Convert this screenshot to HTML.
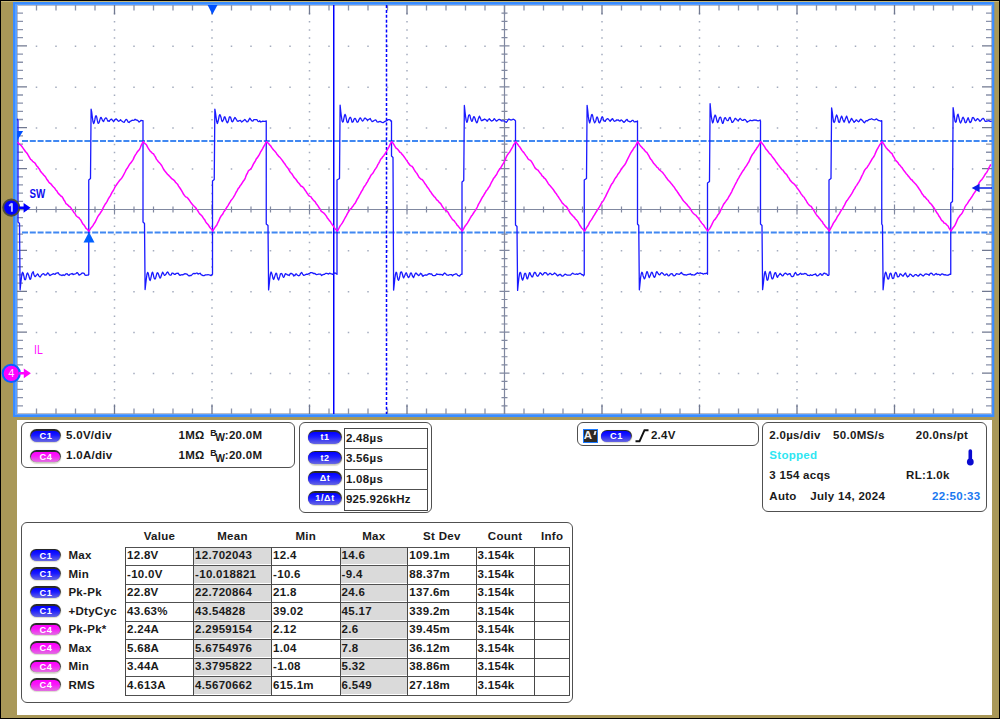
<!DOCTYPE html>
<html><head><meta charset="utf-8"><style>
html,body{margin:0;padding:0;width:1000px;height:719px;overflow:hidden;background:#000}
#s{position:absolute;left:0;top:0}
.t{position:absolute;white-space:nowrap;font-family:"Liberation Sans",sans-serif}
.th{text-align:center;color:#1a1a1a;font-weight:bold}
.box{position:absolute;border:1px solid #505050;background:transparent}
.pill{position:absolute;border-radius:7px;background:linear-gradient(#262626,#3a3a3a 45%,#9a9a90 85%,#d8d8d0);box-shadow:0 0.5px 1px 0.4px #dcdcd0}
.pin{position:absolute;left:0.9px;right:0.9px;top:1.9px;bottom:0.4px;border-radius:6px}
.ptx{position:absolute;left:0;right:0;text-align:center;color:#fff;font-family:"Liberation Sans",sans-serif;font-weight:bold;line-height:1;white-space:nowrap;letter-spacing:0.6px;text-indent:0.6px}
.hl{position:absolute;height:1px;background:#505050}
.vl{position:absolute;width:1px;background:#484848}
.ctab{position:absolute;border:1px solid #484848;box-sizing:border-box}
</style></head><body>
<svg id="s" width="1000" height="719" viewBox="0 0 1000 719">
<rect x="0" y="0" width="1000" height="719" fill="#000"/>
<rect x="1" y="1" width="998" height="717" fill="#a99858"/>
<rect x="1" y="1" width="998" height="1" fill="#c8b878"/>
<rect x="13" y="2" width="981.3" height="415" fill="#3a8cff"/>
<rect x="15" y="4" width="977.3" height="411" fill="#5aa0ff"/>
<rect x="17" y="5" width="975" height="409" fill="#fff"/>
<rect x="17" y="420" width="975" height="295" fill="#fff"/>
<rect x="17.5" y="5.5" width="974" height="408" fill="none" stroke="#b8bccc" stroke-width="1"/>
<path d="M113.75 12.78h1.5v1.5h-1.5zM113.75 20.96h1.5v1.5h-1.5zM113.75 29.14h1.5v1.5h-1.5zM113.75 37.32h1.5v1.5h-1.5zM113.75 45.5h1.5v1.5h-1.5zM113.75 53.68h1.5v1.5h-1.5zM113.75 61.86h1.5v1.5h-1.5zM113.75 70.04h1.5v1.5h-1.5zM113.75 78.22h1.5v1.5h-1.5zM113.75 86.4h1.5v1.5h-1.5zM113.75 94.58h1.5v1.5h-1.5zM113.75 102.76h1.5v1.5h-1.5zM113.75 110.94h1.5v1.5h-1.5zM113.75 119.12h1.5v1.5h-1.5zM113.75 127.3h1.5v1.5h-1.5zM113.75 135.48h1.5v1.5h-1.5zM113.75 143.66h1.5v1.5h-1.5zM113.75 151.84h1.5v1.5h-1.5zM113.75 160.02h1.5v1.5h-1.5zM113.75 168.2h1.5v1.5h-1.5zM113.75 176.38h1.5v1.5h-1.5zM113.75 184.56h1.5v1.5h-1.5zM113.75 192.74h1.5v1.5h-1.5zM113.75 200.92h1.5v1.5h-1.5zM113.75 209.1h1.5v1.5h-1.5zM113.75 217.28h1.5v1.5h-1.5zM113.75 225.46h1.5v1.5h-1.5zM113.75 233.64h1.5v1.5h-1.5zM113.75 241.82h1.5v1.5h-1.5zM113.75 250h1.5v1.5h-1.5zM113.75 258.18h1.5v1.5h-1.5zM113.75 266.36h1.5v1.5h-1.5zM113.75 274.54h1.5v1.5h-1.5zM113.75 282.72h1.5v1.5h-1.5zM113.75 290.9h1.5v1.5h-1.5zM113.75 299.08h1.5v1.5h-1.5zM113.75 307.26h1.5v1.5h-1.5zM113.75 315.44h1.5v1.5h-1.5zM113.75 323.62h1.5v1.5h-1.5zM113.75 331.8h1.5v1.5h-1.5zM113.75 339.98h1.5v1.5h-1.5zM113.75 348.16h1.5v1.5h-1.5zM113.75 356.34h1.5v1.5h-1.5zM113.75 364.52h1.5v1.5h-1.5zM113.75 372.7h1.5v1.5h-1.5zM113.75 380.88h1.5v1.5h-1.5zM113.75 389.06h1.5v1.5h-1.5zM113.75 397.24h1.5v1.5h-1.5zM113.75 405.42h1.5v1.5h-1.5zM211.25 12.78h1.5v1.5h-1.5zM211.25 20.96h1.5v1.5h-1.5zM211.25 29.14h1.5v1.5h-1.5zM211.25 37.32h1.5v1.5h-1.5zM211.25 45.5h1.5v1.5h-1.5zM211.25 53.68h1.5v1.5h-1.5zM211.25 61.86h1.5v1.5h-1.5zM211.25 70.04h1.5v1.5h-1.5zM211.25 78.22h1.5v1.5h-1.5zM211.25 86.4h1.5v1.5h-1.5zM211.25 94.58h1.5v1.5h-1.5zM211.25 102.76h1.5v1.5h-1.5zM211.25 110.94h1.5v1.5h-1.5zM211.25 119.12h1.5v1.5h-1.5zM211.25 127.3h1.5v1.5h-1.5zM211.25 135.48h1.5v1.5h-1.5zM211.25 143.66h1.5v1.5h-1.5zM211.25 151.84h1.5v1.5h-1.5zM211.25 160.02h1.5v1.5h-1.5zM211.25 168.2h1.5v1.5h-1.5zM211.25 176.38h1.5v1.5h-1.5zM211.25 184.56h1.5v1.5h-1.5zM211.25 192.74h1.5v1.5h-1.5zM211.25 200.92h1.5v1.5h-1.5zM211.25 209.1h1.5v1.5h-1.5zM211.25 217.28h1.5v1.5h-1.5zM211.25 225.46h1.5v1.5h-1.5zM211.25 233.64h1.5v1.5h-1.5zM211.25 241.82h1.5v1.5h-1.5zM211.25 250h1.5v1.5h-1.5zM211.25 258.18h1.5v1.5h-1.5zM211.25 266.36h1.5v1.5h-1.5zM211.25 274.54h1.5v1.5h-1.5zM211.25 282.72h1.5v1.5h-1.5zM211.25 290.9h1.5v1.5h-1.5zM211.25 299.08h1.5v1.5h-1.5zM211.25 307.26h1.5v1.5h-1.5zM211.25 315.44h1.5v1.5h-1.5zM211.25 323.62h1.5v1.5h-1.5zM211.25 331.8h1.5v1.5h-1.5zM211.25 339.98h1.5v1.5h-1.5zM211.25 348.16h1.5v1.5h-1.5zM211.25 356.34h1.5v1.5h-1.5zM211.25 364.52h1.5v1.5h-1.5zM211.25 372.7h1.5v1.5h-1.5zM211.25 380.88h1.5v1.5h-1.5zM211.25 389.06h1.5v1.5h-1.5zM211.25 397.24h1.5v1.5h-1.5zM211.25 405.42h1.5v1.5h-1.5zM308.75 12.78h1.5v1.5h-1.5zM308.75 20.96h1.5v1.5h-1.5zM308.75 29.14h1.5v1.5h-1.5zM308.75 37.32h1.5v1.5h-1.5zM308.75 45.5h1.5v1.5h-1.5zM308.75 53.68h1.5v1.5h-1.5zM308.75 61.86h1.5v1.5h-1.5zM308.75 70.04h1.5v1.5h-1.5zM308.75 78.22h1.5v1.5h-1.5zM308.75 86.4h1.5v1.5h-1.5zM308.75 94.58h1.5v1.5h-1.5zM308.75 102.76h1.5v1.5h-1.5zM308.75 110.94h1.5v1.5h-1.5zM308.75 119.12h1.5v1.5h-1.5zM308.75 127.3h1.5v1.5h-1.5zM308.75 135.48h1.5v1.5h-1.5zM308.75 143.66h1.5v1.5h-1.5zM308.75 151.84h1.5v1.5h-1.5zM308.75 160.02h1.5v1.5h-1.5zM308.75 168.2h1.5v1.5h-1.5zM308.75 176.38h1.5v1.5h-1.5zM308.75 184.56h1.5v1.5h-1.5zM308.75 192.74h1.5v1.5h-1.5zM308.75 200.92h1.5v1.5h-1.5zM308.75 209.1h1.5v1.5h-1.5zM308.75 217.28h1.5v1.5h-1.5zM308.75 225.46h1.5v1.5h-1.5zM308.75 233.64h1.5v1.5h-1.5zM308.75 241.82h1.5v1.5h-1.5zM308.75 250h1.5v1.5h-1.5zM308.75 258.18h1.5v1.5h-1.5zM308.75 266.36h1.5v1.5h-1.5zM308.75 274.54h1.5v1.5h-1.5zM308.75 282.72h1.5v1.5h-1.5zM308.75 290.9h1.5v1.5h-1.5zM308.75 299.08h1.5v1.5h-1.5zM308.75 307.26h1.5v1.5h-1.5zM308.75 315.44h1.5v1.5h-1.5zM308.75 323.62h1.5v1.5h-1.5zM308.75 331.8h1.5v1.5h-1.5zM308.75 339.98h1.5v1.5h-1.5zM308.75 348.16h1.5v1.5h-1.5zM308.75 356.34h1.5v1.5h-1.5zM308.75 364.52h1.5v1.5h-1.5zM308.75 372.7h1.5v1.5h-1.5zM308.75 380.88h1.5v1.5h-1.5zM308.75 389.06h1.5v1.5h-1.5zM308.75 397.24h1.5v1.5h-1.5zM308.75 405.42h1.5v1.5h-1.5zM406.25 12.78h1.5v1.5h-1.5zM406.25 20.96h1.5v1.5h-1.5zM406.25 29.14h1.5v1.5h-1.5zM406.25 37.32h1.5v1.5h-1.5zM406.25 45.5h1.5v1.5h-1.5zM406.25 53.68h1.5v1.5h-1.5zM406.25 61.86h1.5v1.5h-1.5zM406.25 70.04h1.5v1.5h-1.5zM406.25 78.22h1.5v1.5h-1.5zM406.25 86.4h1.5v1.5h-1.5zM406.25 94.58h1.5v1.5h-1.5zM406.25 102.76h1.5v1.5h-1.5zM406.25 110.94h1.5v1.5h-1.5zM406.25 119.12h1.5v1.5h-1.5zM406.25 127.3h1.5v1.5h-1.5zM406.25 135.48h1.5v1.5h-1.5zM406.25 143.66h1.5v1.5h-1.5zM406.25 151.84h1.5v1.5h-1.5zM406.25 160.02h1.5v1.5h-1.5zM406.25 168.2h1.5v1.5h-1.5zM406.25 176.38h1.5v1.5h-1.5zM406.25 184.56h1.5v1.5h-1.5zM406.25 192.74h1.5v1.5h-1.5zM406.25 200.92h1.5v1.5h-1.5zM406.25 209.1h1.5v1.5h-1.5zM406.25 217.28h1.5v1.5h-1.5zM406.25 225.46h1.5v1.5h-1.5zM406.25 233.64h1.5v1.5h-1.5zM406.25 241.82h1.5v1.5h-1.5zM406.25 250h1.5v1.5h-1.5zM406.25 258.18h1.5v1.5h-1.5zM406.25 266.36h1.5v1.5h-1.5zM406.25 274.54h1.5v1.5h-1.5zM406.25 282.72h1.5v1.5h-1.5zM406.25 290.9h1.5v1.5h-1.5zM406.25 299.08h1.5v1.5h-1.5zM406.25 307.26h1.5v1.5h-1.5zM406.25 315.44h1.5v1.5h-1.5zM406.25 323.62h1.5v1.5h-1.5zM406.25 331.8h1.5v1.5h-1.5zM406.25 339.98h1.5v1.5h-1.5zM406.25 348.16h1.5v1.5h-1.5zM406.25 356.34h1.5v1.5h-1.5zM406.25 364.52h1.5v1.5h-1.5zM406.25 372.7h1.5v1.5h-1.5zM406.25 380.88h1.5v1.5h-1.5zM406.25 389.06h1.5v1.5h-1.5zM406.25 397.24h1.5v1.5h-1.5zM406.25 405.42h1.5v1.5h-1.5zM601.25 12.78h1.5v1.5h-1.5zM601.25 20.96h1.5v1.5h-1.5zM601.25 29.14h1.5v1.5h-1.5zM601.25 37.32h1.5v1.5h-1.5zM601.25 45.5h1.5v1.5h-1.5zM601.25 53.68h1.5v1.5h-1.5zM601.25 61.86h1.5v1.5h-1.5zM601.25 70.04h1.5v1.5h-1.5zM601.25 78.22h1.5v1.5h-1.5zM601.25 86.4h1.5v1.5h-1.5zM601.25 94.58h1.5v1.5h-1.5zM601.25 102.76h1.5v1.5h-1.5zM601.25 110.94h1.5v1.5h-1.5zM601.25 119.12h1.5v1.5h-1.5zM601.25 127.3h1.5v1.5h-1.5zM601.25 135.48h1.5v1.5h-1.5zM601.25 143.66h1.5v1.5h-1.5zM601.25 151.84h1.5v1.5h-1.5zM601.25 160.02h1.5v1.5h-1.5zM601.25 168.2h1.5v1.5h-1.5zM601.25 176.38h1.5v1.5h-1.5zM601.25 184.56h1.5v1.5h-1.5zM601.25 192.74h1.5v1.5h-1.5zM601.25 200.92h1.5v1.5h-1.5zM601.25 209.1h1.5v1.5h-1.5zM601.25 217.28h1.5v1.5h-1.5zM601.25 225.46h1.5v1.5h-1.5zM601.25 233.64h1.5v1.5h-1.5zM601.25 241.82h1.5v1.5h-1.5zM601.25 250h1.5v1.5h-1.5zM601.25 258.18h1.5v1.5h-1.5zM601.25 266.36h1.5v1.5h-1.5zM601.25 274.54h1.5v1.5h-1.5zM601.25 282.72h1.5v1.5h-1.5zM601.25 290.9h1.5v1.5h-1.5zM601.25 299.08h1.5v1.5h-1.5zM601.25 307.26h1.5v1.5h-1.5zM601.25 315.44h1.5v1.5h-1.5zM601.25 323.62h1.5v1.5h-1.5zM601.25 331.8h1.5v1.5h-1.5zM601.25 339.98h1.5v1.5h-1.5zM601.25 348.16h1.5v1.5h-1.5zM601.25 356.34h1.5v1.5h-1.5zM601.25 364.52h1.5v1.5h-1.5zM601.25 372.7h1.5v1.5h-1.5zM601.25 380.88h1.5v1.5h-1.5zM601.25 389.06h1.5v1.5h-1.5zM601.25 397.24h1.5v1.5h-1.5zM601.25 405.42h1.5v1.5h-1.5zM698.75 12.78h1.5v1.5h-1.5zM698.75 20.96h1.5v1.5h-1.5zM698.75 29.14h1.5v1.5h-1.5zM698.75 37.32h1.5v1.5h-1.5zM698.75 45.5h1.5v1.5h-1.5zM698.75 53.68h1.5v1.5h-1.5zM698.75 61.86h1.5v1.5h-1.5zM698.75 70.04h1.5v1.5h-1.5zM698.75 78.22h1.5v1.5h-1.5zM698.75 86.4h1.5v1.5h-1.5zM698.75 94.58h1.5v1.5h-1.5zM698.75 102.76h1.5v1.5h-1.5zM698.75 110.94h1.5v1.5h-1.5zM698.75 119.12h1.5v1.5h-1.5zM698.75 127.3h1.5v1.5h-1.5zM698.75 135.48h1.5v1.5h-1.5zM698.75 143.66h1.5v1.5h-1.5zM698.75 151.84h1.5v1.5h-1.5zM698.75 160.02h1.5v1.5h-1.5zM698.75 168.2h1.5v1.5h-1.5zM698.75 176.38h1.5v1.5h-1.5zM698.75 184.56h1.5v1.5h-1.5zM698.75 192.74h1.5v1.5h-1.5zM698.75 200.92h1.5v1.5h-1.5zM698.75 209.1h1.5v1.5h-1.5zM698.75 217.28h1.5v1.5h-1.5zM698.75 225.46h1.5v1.5h-1.5zM698.75 233.64h1.5v1.5h-1.5zM698.75 241.82h1.5v1.5h-1.5zM698.75 250h1.5v1.5h-1.5zM698.75 258.18h1.5v1.5h-1.5zM698.75 266.36h1.5v1.5h-1.5zM698.75 274.54h1.5v1.5h-1.5zM698.75 282.72h1.5v1.5h-1.5zM698.75 290.9h1.5v1.5h-1.5zM698.75 299.08h1.5v1.5h-1.5zM698.75 307.26h1.5v1.5h-1.5zM698.75 315.44h1.5v1.5h-1.5zM698.75 323.62h1.5v1.5h-1.5zM698.75 331.8h1.5v1.5h-1.5zM698.75 339.98h1.5v1.5h-1.5zM698.75 348.16h1.5v1.5h-1.5zM698.75 356.34h1.5v1.5h-1.5zM698.75 364.52h1.5v1.5h-1.5zM698.75 372.7h1.5v1.5h-1.5zM698.75 380.88h1.5v1.5h-1.5zM698.75 389.06h1.5v1.5h-1.5zM698.75 397.24h1.5v1.5h-1.5zM698.75 405.42h1.5v1.5h-1.5zM796.25 12.78h1.5v1.5h-1.5zM796.25 20.96h1.5v1.5h-1.5zM796.25 29.14h1.5v1.5h-1.5zM796.25 37.32h1.5v1.5h-1.5zM796.25 45.5h1.5v1.5h-1.5zM796.25 53.68h1.5v1.5h-1.5zM796.25 61.86h1.5v1.5h-1.5zM796.25 70.04h1.5v1.5h-1.5zM796.25 78.22h1.5v1.5h-1.5zM796.25 86.4h1.5v1.5h-1.5zM796.25 94.58h1.5v1.5h-1.5zM796.25 102.76h1.5v1.5h-1.5zM796.25 110.94h1.5v1.5h-1.5zM796.25 119.12h1.5v1.5h-1.5zM796.25 127.3h1.5v1.5h-1.5zM796.25 135.48h1.5v1.5h-1.5zM796.25 143.66h1.5v1.5h-1.5zM796.25 151.84h1.5v1.5h-1.5zM796.25 160.02h1.5v1.5h-1.5zM796.25 168.2h1.5v1.5h-1.5zM796.25 176.38h1.5v1.5h-1.5zM796.25 184.56h1.5v1.5h-1.5zM796.25 192.74h1.5v1.5h-1.5zM796.25 200.92h1.5v1.5h-1.5zM796.25 209.1h1.5v1.5h-1.5zM796.25 217.28h1.5v1.5h-1.5zM796.25 225.46h1.5v1.5h-1.5zM796.25 233.64h1.5v1.5h-1.5zM796.25 241.82h1.5v1.5h-1.5zM796.25 250h1.5v1.5h-1.5zM796.25 258.18h1.5v1.5h-1.5zM796.25 266.36h1.5v1.5h-1.5zM796.25 274.54h1.5v1.5h-1.5zM796.25 282.72h1.5v1.5h-1.5zM796.25 290.9h1.5v1.5h-1.5zM796.25 299.08h1.5v1.5h-1.5zM796.25 307.26h1.5v1.5h-1.5zM796.25 315.44h1.5v1.5h-1.5zM796.25 323.62h1.5v1.5h-1.5zM796.25 331.8h1.5v1.5h-1.5zM796.25 339.98h1.5v1.5h-1.5zM796.25 348.16h1.5v1.5h-1.5zM796.25 356.34h1.5v1.5h-1.5zM796.25 364.52h1.5v1.5h-1.5zM796.25 372.7h1.5v1.5h-1.5zM796.25 380.88h1.5v1.5h-1.5zM796.25 389.06h1.5v1.5h-1.5zM796.25 397.24h1.5v1.5h-1.5zM796.25 405.42h1.5v1.5h-1.5zM893.75 12.78h1.5v1.5h-1.5zM893.75 20.96h1.5v1.5h-1.5zM893.75 29.14h1.5v1.5h-1.5zM893.75 37.32h1.5v1.5h-1.5zM893.75 45.5h1.5v1.5h-1.5zM893.75 53.68h1.5v1.5h-1.5zM893.75 61.86h1.5v1.5h-1.5zM893.75 70.04h1.5v1.5h-1.5zM893.75 78.22h1.5v1.5h-1.5zM893.75 86.4h1.5v1.5h-1.5zM893.75 94.58h1.5v1.5h-1.5zM893.75 102.76h1.5v1.5h-1.5zM893.75 110.94h1.5v1.5h-1.5zM893.75 119.12h1.5v1.5h-1.5zM893.75 127.3h1.5v1.5h-1.5zM893.75 135.48h1.5v1.5h-1.5zM893.75 143.66h1.5v1.5h-1.5zM893.75 151.84h1.5v1.5h-1.5zM893.75 160.02h1.5v1.5h-1.5zM893.75 168.2h1.5v1.5h-1.5zM893.75 176.38h1.5v1.5h-1.5zM893.75 184.56h1.5v1.5h-1.5zM893.75 192.74h1.5v1.5h-1.5zM893.75 200.92h1.5v1.5h-1.5zM893.75 209.1h1.5v1.5h-1.5zM893.75 217.28h1.5v1.5h-1.5zM893.75 225.46h1.5v1.5h-1.5zM893.75 233.64h1.5v1.5h-1.5zM893.75 241.82h1.5v1.5h-1.5zM893.75 250h1.5v1.5h-1.5zM893.75 258.18h1.5v1.5h-1.5zM893.75 266.36h1.5v1.5h-1.5zM893.75 274.54h1.5v1.5h-1.5zM893.75 282.72h1.5v1.5h-1.5zM893.75 290.9h1.5v1.5h-1.5zM893.75 299.08h1.5v1.5h-1.5zM893.75 307.26h1.5v1.5h-1.5zM893.75 315.44h1.5v1.5h-1.5zM893.75 323.62h1.5v1.5h-1.5zM893.75 331.8h1.5v1.5h-1.5zM893.75 339.98h1.5v1.5h-1.5zM893.75 348.16h1.5v1.5h-1.5zM893.75 356.34h1.5v1.5h-1.5zM893.75 364.52h1.5v1.5h-1.5zM893.75 372.7h1.5v1.5h-1.5zM893.75 380.88h1.5v1.5h-1.5zM893.75 389.06h1.5v1.5h-1.5zM893.75 397.24h1.5v1.5h-1.5zM893.75 405.42h1.5v1.5h-1.5zM35.75 45.5h1.5v1.5h-1.5zM55.25 45.5h1.5v1.5h-1.5zM74.75 45.5h1.5v1.5h-1.5zM94.25 45.5h1.5v1.5h-1.5zM133.25 45.5h1.5v1.5h-1.5zM152.75 45.5h1.5v1.5h-1.5zM172.25 45.5h1.5v1.5h-1.5zM191.75 45.5h1.5v1.5h-1.5zM230.75 45.5h1.5v1.5h-1.5zM250.25 45.5h1.5v1.5h-1.5zM269.75 45.5h1.5v1.5h-1.5zM289.25 45.5h1.5v1.5h-1.5zM328.25 45.5h1.5v1.5h-1.5zM347.75 45.5h1.5v1.5h-1.5zM367.25 45.5h1.5v1.5h-1.5zM386.75 45.5h1.5v1.5h-1.5zM425.75 45.5h1.5v1.5h-1.5zM445.25 45.5h1.5v1.5h-1.5zM464.75 45.5h1.5v1.5h-1.5zM484.25 45.5h1.5v1.5h-1.5zM523.25 45.5h1.5v1.5h-1.5zM542.75 45.5h1.5v1.5h-1.5zM562.25 45.5h1.5v1.5h-1.5zM581.75 45.5h1.5v1.5h-1.5zM620.75 45.5h1.5v1.5h-1.5zM640.25 45.5h1.5v1.5h-1.5zM659.75 45.5h1.5v1.5h-1.5zM679.25 45.5h1.5v1.5h-1.5zM718.25 45.5h1.5v1.5h-1.5zM737.75 45.5h1.5v1.5h-1.5zM757.25 45.5h1.5v1.5h-1.5zM776.75 45.5h1.5v1.5h-1.5zM815.75 45.5h1.5v1.5h-1.5zM835.25 45.5h1.5v1.5h-1.5zM854.75 45.5h1.5v1.5h-1.5zM874.25 45.5h1.5v1.5h-1.5zM913.25 45.5h1.5v1.5h-1.5zM932.75 45.5h1.5v1.5h-1.5zM952.25 45.5h1.5v1.5h-1.5zM971.75 45.5h1.5v1.5h-1.5zM35.75 86.4h1.5v1.5h-1.5zM55.25 86.4h1.5v1.5h-1.5zM74.75 86.4h1.5v1.5h-1.5zM94.25 86.4h1.5v1.5h-1.5zM133.25 86.4h1.5v1.5h-1.5zM152.75 86.4h1.5v1.5h-1.5zM172.25 86.4h1.5v1.5h-1.5zM191.75 86.4h1.5v1.5h-1.5zM230.75 86.4h1.5v1.5h-1.5zM250.25 86.4h1.5v1.5h-1.5zM269.75 86.4h1.5v1.5h-1.5zM289.25 86.4h1.5v1.5h-1.5zM328.25 86.4h1.5v1.5h-1.5zM347.75 86.4h1.5v1.5h-1.5zM367.25 86.4h1.5v1.5h-1.5zM386.75 86.4h1.5v1.5h-1.5zM425.75 86.4h1.5v1.5h-1.5zM445.25 86.4h1.5v1.5h-1.5zM464.75 86.4h1.5v1.5h-1.5zM484.25 86.4h1.5v1.5h-1.5zM523.25 86.4h1.5v1.5h-1.5zM542.75 86.4h1.5v1.5h-1.5zM562.25 86.4h1.5v1.5h-1.5zM581.75 86.4h1.5v1.5h-1.5zM620.75 86.4h1.5v1.5h-1.5zM640.25 86.4h1.5v1.5h-1.5zM659.75 86.4h1.5v1.5h-1.5zM679.25 86.4h1.5v1.5h-1.5zM718.25 86.4h1.5v1.5h-1.5zM737.75 86.4h1.5v1.5h-1.5zM757.25 86.4h1.5v1.5h-1.5zM776.75 86.4h1.5v1.5h-1.5zM815.75 86.4h1.5v1.5h-1.5zM835.25 86.4h1.5v1.5h-1.5zM854.75 86.4h1.5v1.5h-1.5zM874.25 86.4h1.5v1.5h-1.5zM913.25 86.4h1.5v1.5h-1.5zM932.75 86.4h1.5v1.5h-1.5zM952.25 86.4h1.5v1.5h-1.5zM971.75 86.4h1.5v1.5h-1.5zM35.75 127.3h1.5v1.5h-1.5zM55.25 127.3h1.5v1.5h-1.5zM74.75 127.3h1.5v1.5h-1.5zM94.25 127.3h1.5v1.5h-1.5zM133.25 127.3h1.5v1.5h-1.5zM152.75 127.3h1.5v1.5h-1.5zM172.25 127.3h1.5v1.5h-1.5zM191.75 127.3h1.5v1.5h-1.5zM230.75 127.3h1.5v1.5h-1.5zM250.25 127.3h1.5v1.5h-1.5zM269.75 127.3h1.5v1.5h-1.5zM289.25 127.3h1.5v1.5h-1.5zM328.25 127.3h1.5v1.5h-1.5zM347.75 127.3h1.5v1.5h-1.5zM367.25 127.3h1.5v1.5h-1.5zM386.75 127.3h1.5v1.5h-1.5zM425.75 127.3h1.5v1.5h-1.5zM445.25 127.3h1.5v1.5h-1.5zM464.75 127.3h1.5v1.5h-1.5zM484.25 127.3h1.5v1.5h-1.5zM523.25 127.3h1.5v1.5h-1.5zM542.75 127.3h1.5v1.5h-1.5zM562.25 127.3h1.5v1.5h-1.5zM581.75 127.3h1.5v1.5h-1.5zM620.75 127.3h1.5v1.5h-1.5zM640.25 127.3h1.5v1.5h-1.5zM659.75 127.3h1.5v1.5h-1.5zM679.25 127.3h1.5v1.5h-1.5zM718.25 127.3h1.5v1.5h-1.5zM737.75 127.3h1.5v1.5h-1.5zM757.25 127.3h1.5v1.5h-1.5zM776.75 127.3h1.5v1.5h-1.5zM815.75 127.3h1.5v1.5h-1.5zM835.25 127.3h1.5v1.5h-1.5zM854.75 127.3h1.5v1.5h-1.5zM874.25 127.3h1.5v1.5h-1.5zM913.25 127.3h1.5v1.5h-1.5zM932.75 127.3h1.5v1.5h-1.5zM952.25 127.3h1.5v1.5h-1.5zM971.75 127.3h1.5v1.5h-1.5zM35.75 168.2h1.5v1.5h-1.5zM55.25 168.2h1.5v1.5h-1.5zM74.75 168.2h1.5v1.5h-1.5zM94.25 168.2h1.5v1.5h-1.5zM133.25 168.2h1.5v1.5h-1.5zM152.75 168.2h1.5v1.5h-1.5zM172.25 168.2h1.5v1.5h-1.5zM191.75 168.2h1.5v1.5h-1.5zM230.75 168.2h1.5v1.5h-1.5zM250.25 168.2h1.5v1.5h-1.5zM269.75 168.2h1.5v1.5h-1.5zM289.25 168.2h1.5v1.5h-1.5zM328.25 168.2h1.5v1.5h-1.5zM347.75 168.2h1.5v1.5h-1.5zM367.25 168.2h1.5v1.5h-1.5zM386.75 168.2h1.5v1.5h-1.5zM425.75 168.2h1.5v1.5h-1.5zM445.25 168.2h1.5v1.5h-1.5zM464.75 168.2h1.5v1.5h-1.5zM484.25 168.2h1.5v1.5h-1.5zM523.25 168.2h1.5v1.5h-1.5zM542.75 168.2h1.5v1.5h-1.5zM562.25 168.2h1.5v1.5h-1.5zM581.75 168.2h1.5v1.5h-1.5zM620.75 168.2h1.5v1.5h-1.5zM640.25 168.2h1.5v1.5h-1.5zM659.75 168.2h1.5v1.5h-1.5zM679.25 168.2h1.5v1.5h-1.5zM718.25 168.2h1.5v1.5h-1.5zM737.75 168.2h1.5v1.5h-1.5zM757.25 168.2h1.5v1.5h-1.5zM776.75 168.2h1.5v1.5h-1.5zM815.75 168.2h1.5v1.5h-1.5zM835.25 168.2h1.5v1.5h-1.5zM854.75 168.2h1.5v1.5h-1.5zM874.25 168.2h1.5v1.5h-1.5zM913.25 168.2h1.5v1.5h-1.5zM932.75 168.2h1.5v1.5h-1.5zM952.25 168.2h1.5v1.5h-1.5zM971.75 168.2h1.5v1.5h-1.5zM35.75 250h1.5v1.5h-1.5zM55.25 250h1.5v1.5h-1.5zM74.75 250h1.5v1.5h-1.5zM94.25 250h1.5v1.5h-1.5zM133.25 250h1.5v1.5h-1.5zM152.75 250h1.5v1.5h-1.5zM172.25 250h1.5v1.5h-1.5zM191.75 250h1.5v1.5h-1.5zM230.75 250h1.5v1.5h-1.5zM250.25 250h1.5v1.5h-1.5zM269.75 250h1.5v1.5h-1.5zM289.25 250h1.5v1.5h-1.5zM328.25 250h1.5v1.5h-1.5zM347.75 250h1.5v1.5h-1.5zM367.25 250h1.5v1.5h-1.5zM386.75 250h1.5v1.5h-1.5zM425.75 250h1.5v1.5h-1.5zM445.25 250h1.5v1.5h-1.5zM464.75 250h1.5v1.5h-1.5zM484.25 250h1.5v1.5h-1.5zM523.25 250h1.5v1.5h-1.5zM542.75 250h1.5v1.5h-1.5zM562.25 250h1.5v1.5h-1.5zM581.75 250h1.5v1.5h-1.5zM620.75 250h1.5v1.5h-1.5zM640.25 250h1.5v1.5h-1.5zM659.75 250h1.5v1.5h-1.5zM679.25 250h1.5v1.5h-1.5zM718.25 250h1.5v1.5h-1.5zM737.75 250h1.5v1.5h-1.5zM757.25 250h1.5v1.5h-1.5zM776.75 250h1.5v1.5h-1.5zM815.75 250h1.5v1.5h-1.5zM835.25 250h1.5v1.5h-1.5zM854.75 250h1.5v1.5h-1.5zM874.25 250h1.5v1.5h-1.5zM913.25 250h1.5v1.5h-1.5zM932.75 250h1.5v1.5h-1.5zM952.25 250h1.5v1.5h-1.5zM971.75 250h1.5v1.5h-1.5zM35.75 290.9h1.5v1.5h-1.5zM55.25 290.9h1.5v1.5h-1.5zM74.75 290.9h1.5v1.5h-1.5zM94.25 290.9h1.5v1.5h-1.5zM133.25 290.9h1.5v1.5h-1.5zM152.75 290.9h1.5v1.5h-1.5zM172.25 290.9h1.5v1.5h-1.5zM191.75 290.9h1.5v1.5h-1.5zM230.75 290.9h1.5v1.5h-1.5zM250.25 290.9h1.5v1.5h-1.5zM269.75 290.9h1.5v1.5h-1.5zM289.25 290.9h1.5v1.5h-1.5zM328.25 290.9h1.5v1.5h-1.5zM347.75 290.9h1.5v1.5h-1.5zM367.25 290.9h1.5v1.5h-1.5zM386.75 290.9h1.5v1.5h-1.5zM425.75 290.9h1.5v1.5h-1.5zM445.25 290.9h1.5v1.5h-1.5zM464.75 290.9h1.5v1.5h-1.5zM484.25 290.9h1.5v1.5h-1.5zM523.25 290.9h1.5v1.5h-1.5zM542.75 290.9h1.5v1.5h-1.5zM562.25 290.9h1.5v1.5h-1.5zM581.75 290.9h1.5v1.5h-1.5zM620.75 290.9h1.5v1.5h-1.5zM640.25 290.9h1.5v1.5h-1.5zM659.75 290.9h1.5v1.5h-1.5zM679.25 290.9h1.5v1.5h-1.5zM718.25 290.9h1.5v1.5h-1.5zM737.75 290.9h1.5v1.5h-1.5zM757.25 290.9h1.5v1.5h-1.5zM776.75 290.9h1.5v1.5h-1.5zM815.75 290.9h1.5v1.5h-1.5zM835.25 290.9h1.5v1.5h-1.5zM854.75 290.9h1.5v1.5h-1.5zM874.25 290.9h1.5v1.5h-1.5zM913.25 290.9h1.5v1.5h-1.5zM932.75 290.9h1.5v1.5h-1.5zM952.25 290.9h1.5v1.5h-1.5zM971.75 290.9h1.5v1.5h-1.5zM35.75 331.8h1.5v1.5h-1.5zM55.25 331.8h1.5v1.5h-1.5zM74.75 331.8h1.5v1.5h-1.5zM94.25 331.8h1.5v1.5h-1.5zM133.25 331.8h1.5v1.5h-1.5zM152.75 331.8h1.5v1.5h-1.5zM172.25 331.8h1.5v1.5h-1.5zM191.75 331.8h1.5v1.5h-1.5zM230.75 331.8h1.5v1.5h-1.5zM250.25 331.8h1.5v1.5h-1.5zM269.75 331.8h1.5v1.5h-1.5zM289.25 331.8h1.5v1.5h-1.5zM328.25 331.8h1.5v1.5h-1.5zM347.75 331.8h1.5v1.5h-1.5zM367.25 331.8h1.5v1.5h-1.5zM386.75 331.8h1.5v1.5h-1.5zM425.75 331.8h1.5v1.5h-1.5zM445.25 331.8h1.5v1.5h-1.5zM464.75 331.8h1.5v1.5h-1.5zM484.25 331.8h1.5v1.5h-1.5zM523.25 331.8h1.5v1.5h-1.5zM542.75 331.8h1.5v1.5h-1.5zM562.25 331.8h1.5v1.5h-1.5zM581.75 331.8h1.5v1.5h-1.5zM620.75 331.8h1.5v1.5h-1.5zM640.25 331.8h1.5v1.5h-1.5zM659.75 331.8h1.5v1.5h-1.5zM679.25 331.8h1.5v1.5h-1.5zM718.25 331.8h1.5v1.5h-1.5zM737.75 331.8h1.5v1.5h-1.5zM757.25 331.8h1.5v1.5h-1.5zM776.75 331.8h1.5v1.5h-1.5zM815.75 331.8h1.5v1.5h-1.5zM835.25 331.8h1.5v1.5h-1.5zM854.75 331.8h1.5v1.5h-1.5zM874.25 331.8h1.5v1.5h-1.5zM913.25 331.8h1.5v1.5h-1.5zM932.75 331.8h1.5v1.5h-1.5zM952.25 331.8h1.5v1.5h-1.5zM971.75 331.8h1.5v1.5h-1.5zM35.75 372.7h1.5v1.5h-1.5zM55.25 372.7h1.5v1.5h-1.5zM74.75 372.7h1.5v1.5h-1.5zM94.25 372.7h1.5v1.5h-1.5zM133.25 372.7h1.5v1.5h-1.5zM152.75 372.7h1.5v1.5h-1.5zM172.25 372.7h1.5v1.5h-1.5zM191.75 372.7h1.5v1.5h-1.5zM230.75 372.7h1.5v1.5h-1.5zM250.25 372.7h1.5v1.5h-1.5zM269.75 372.7h1.5v1.5h-1.5zM289.25 372.7h1.5v1.5h-1.5zM328.25 372.7h1.5v1.5h-1.5zM347.75 372.7h1.5v1.5h-1.5zM367.25 372.7h1.5v1.5h-1.5zM386.75 372.7h1.5v1.5h-1.5zM425.75 372.7h1.5v1.5h-1.5zM445.25 372.7h1.5v1.5h-1.5zM464.75 372.7h1.5v1.5h-1.5zM484.25 372.7h1.5v1.5h-1.5zM523.25 372.7h1.5v1.5h-1.5zM542.75 372.7h1.5v1.5h-1.5zM562.25 372.7h1.5v1.5h-1.5zM581.75 372.7h1.5v1.5h-1.5zM620.75 372.7h1.5v1.5h-1.5zM640.25 372.7h1.5v1.5h-1.5zM659.75 372.7h1.5v1.5h-1.5zM679.25 372.7h1.5v1.5h-1.5zM718.25 372.7h1.5v1.5h-1.5zM737.75 372.7h1.5v1.5h-1.5zM757.25 372.7h1.5v1.5h-1.5zM776.75 372.7h1.5v1.5h-1.5zM815.75 372.7h1.5v1.5h-1.5zM835.25 372.7h1.5v1.5h-1.5zM854.75 372.7h1.5v1.5h-1.5zM874.25 372.7h1.5v1.5h-1.5zM913.25 372.7h1.5v1.5h-1.5zM932.75 372.7h1.5v1.5h-1.5zM952.25 372.7h1.5v1.5h-1.5zM971.75 372.7h1.5v1.5h-1.5z" fill="#a4acbe"/>
<path d="M36.5 5v5.5 M36.5 414v-5.5 M56 5v5.5 M56 414v-5.5 M75.5 5v5.5 M75.5 414v-5.5 M95 5v5.5 M95 414v-5.5 M134 5v5.5 M134 414v-5.5 M153.5 5v5.5 M153.5 414v-5.5 M173 5v5.5 M173 414v-5.5 M192.5 5v5.5 M192.5 414v-5.5 M231.5 5v5.5 M231.5 414v-5.5 M251 5v5.5 M251 414v-5.5 M270.5 5v5.5 M270.5 414v-5.5 M290 5v5.5 M290 414v-5.5 M329 5v5.5 M329 414v-5.5 M348.5 5v5.5 M348.5 414v-5.5 M368 5v5.5 M368 414v-5.5 M387.5 5v5.5 M387.5 414v-5.5 M426.5 5v5.5 M426.5 414v-5.5 M446 5v5.5 M446 414v-5.5 M465.5 5v5.5 M465.5 414v-5.5 M485 5v5.5 M485 414v-5.5 M524 5v5.5 M524 414v-5.5 M543.5 5v5.5 M543.5 414v-5.5 M563 5v5.5 M563 414v-5.5 M582.5 5v5.5 M582.5 414v-5.5 M621.5 5v5.5 M621.5 414v-5.5 M641 5v5.5 M641 414v-5.5 M660.5 5v5.5 M660.5 414v-5.5 M680 5v5.5 M680 414v-5.5 M719 5v5.5 M719 414v-5.5 M738.5 5v5.5 M738.5 414v-5.5 M758 5v5.5 M758 414v-5.5 M777.5 5v5.5 M777.5 414v-5.5 M816.5 5v5.5 M816.5 414v-5.5 M836 5v5.5 M836 414v-5.5 M855.5 5v5.5 M855.5 414v-5.5 M875 5v5.5 M875 414v-5.5 M914 5v5.5 M914 414v-5.5 M933.5 5v5.5 M933.5 414v-5.5 M953 5v5.5 M953 414v-5.5 M972.5 5v5.5 M972.5 414v-5.5 M17 13.18h6 M992 13.18h-6 M17 21.36h6 M992 21.36h-6 M17 29.54h6 M992 29.54h-6 M17 37.72h6 M992 37.72h-6 M17 54.08h6 M992 54.08h-6 M17 62.26h6 M992 62.26h-6 M17 70.44h6 M992 70.44h-6 M17 78.62h6 M992 78.62h-6 M17 94.98h6 M992 94.98h-6 M17 103.16h6 M992 103.16h-6 M17 111.34h6 M992 111.34h-6 M17 119.52h6 M992 119.52h-6 M17 135.88h6 M992 135.88h-6 M17 144.06h6 M992 144.06h-6 M17 152.24h6 M992 152.24h-6 M17 160.42h6 M992 160.42h-6 M17 176.78h6 M992 176.78h-6 M17 184.96h6 M992 184.96h-6 M17 193.14h6 M992 193.14h-6 M17 201.32h6 M992 201.32h-6 M17 217.68h6 M992 217.68h-6 M17 225.86h6 M992 225.86h-6 M17 234.04h6 M992 234.04h-6 M17 242.22h6 M992 242.22h-6 M17 258.58h6 M992 258.58h-6 M17 266.76h6 M992 266.76h-6 M17 274.94h6 M992 274.94h-6 M17 283.12h6 M992 283.12h-6 M17 299.48h6 M992 299.48h-6 M17 307.66h6 M992 307.66h-6 M17 315.84h6 M992 315.84h-6 M17 324.02h6 M992 324.02h-6 M17 340.38h6 M992 340.38h-6 M17 348.56h6 M992 348.56h-6 M17 356.74h6 M992 356.74h-6 M17 364.92h6 M992 364.92h-6 M17 381.28h6 M992 381.28h-6 M17 389.46h6 M992 389.46h-6 M17 397.64h6 M992 397.64h-6 M17 405.82h6 M992 405.82h-6" stroke="#8a92aa" stroke-width="1.3" fill="none"/>
<path d="M114.5 5v9.5 M114.5 414v-9.5 M212 5v9.5 M212 414v-9.5 M309.5 5v9.5 M309.5 414v-9.5 M407 5v9.5 M407 414v-9.5 M504.5 5v9.5 M504.5 414v-9.5 M602 5v9.5 M602 414v-9.5 M699.5 5v9.5 M699.5 414v-9.5 M797 5v9.5 M797 414v-9.5 M894.5 5v9.5 M894.5 414v-9.5 M17 45.9h10 M992 45.9h-10 M17 86.8h10 M992 86.8h-10 M17 127.7h10 M992 127.7h-10 M17 168.6h10 M992 168.6h-10 M17 209.5h10 M992 209.5h-10 M17 250.4h10 M992 250.4h-10 M17 291.3h10 M992 291.3h-10 M17 332.2h10 M992 332.2h-10 M17 373.1h10 M992 373.1h-10" stroke="#707890" stroke-width="1.3" fill="none"/>
<path d="M17 209.5H992 M504.5 5V414 M36.5 206.5v6 M56 206.5v6 M75.5 206.5v6 M95 206.5v6 M114.5 204.5v10 M134 206.5v6 M153.5 206.5v6 M173 206.5v6 M192.5 206.5v6 M212 204.5v10 M231.5 206.5v6 M251 206.5v6 M270.5 206.5v6 M290 206.5v6 M309.5 204.5v10 M329 206.5v6 M348.5 206.5v6 M368 206.5v6 M387.5 206.5v6 M407 204.5v10 M426.5 206.5v6 M446 206.5v6 M465.5 206.5v6 M485 206.5v6 M504.5 204.5v10 M524 206.5v6 M543.5 206.5v6 M563 206.5v6 M582.5 206.5v6 M602 204.5v10 M621.5 206.5v6 M641 206.5v6 M660.5 206.5v6 M680 206.5v6 M699.5 204.5v10 M719 206.5v6 M738.5 206.5v6 M758 206.5v6 M777.5 206.5v6 M797 204.5v10 M816.5 206.5v6 M836 206.5v6 M855.5 206.5v6 M875 206.5v6 M894.5 204.5v10 M914 206.5v6 M933.5 206.5v6 M953 206.5v6 M972.5 206.5v6 M501.5 13.18h6 M501.5 21.36h6 M501.5 29.54h6 M501.5 37.72h6 M499.5 45.9h10 M501.5 54.08h6 M501.5 62.26h6 M501.5 70.44h6 M501.5 78.62h6 M499.5 86.8h10 M501.5 94.98h6 M501.5 103.16h6 M501.5 111.34h6 M501.5 119.52h6 M499.5 127.7h10 M501.5 135.88h6 M501.5 144.06h6 M501.5 152.24h6 M501.5 160.42h6 M499.5 168.6h10 M501.5 176.78h6 M501.5 184.96h6 M501.5 193.14h6 M501.5 201.32h6 M499.5 209.5h10 M501.5 217.68h6 M501.5 225.86h6 M501.5 234.04h6 M501.5 242.22h6 M499.5 250.4h10 M501.5 258.58h6 M501.5 266.76h6 M501.5 274.94h6 M501.5 283.12h6 M499.5 291.3h10 M501.5 299.48h6 M501.5 307.66h6 M501.5 315.84h6 M501.5 324.02h6 M499.5 332.2h10 M501.5 340.38h6 M501.5 348.56h6 M501.5 356.74h6 M501.5 364.92h6 M499.5 373.1h10 M501.5 381.28h6 M501.5 389.46h6 M501.5 397.64h6 M501.5 405.82h6" stroke="#8088a0" stroke-width="1.2" fill="none"/>
<path d="M22 140.9H992 M22 232.4H992" stroke="#4088f2" stroke-width="2" stroke-dasharray="6 1.8" fill="none"/>
<path d="M333.75 5V414" stroke="#0000ff" stroke-width="1.5" fill="none"/>
<path d="M386.5 5V414" stroke="#0000ff" stroke-width="1.5" stroke-dasharray="3 1.9" fill="none"/>
<polyline points="17.3,118.8 18,120.8 18,222 19.5,223.5 20.1,289.82 20.73,283.7 21.35,278.49 21.98,273.53 22.6,272.25 23.23,273.25 23.85,275.91 24.48,279.2 25.1,279.83 25.73,279.06 26.35,276.11 26.98,273.65 27.6,272.96 28.23,274.3 28.85,275.72 29.48,278.08 30.1,279.39 30.73,278.87 31.35,276.22 31.98,273.39 32.6,272.53 33.23,271.67 33.85,274.45 34.48,275.85 35.1,276.62 35.73,276.21 36.35,275.21 36.98,274.63 37.6,273.82 38.23,274.68 38.85,275.82 39.48,276.55 40.1,277.07 40.73,276.22 41.35,275.23 41.98,274.46 42.6,274.06 43.23,273.63 43.85,273.89 44.48,274.72 45.1,275.21 45.73,274.91 46.35,274.79 46.98,273.79 47.6,272.84 48.23,273.34 48.85,273.97 49.48,275.26 50.1,275.6 51.1,274.76 52.1,274.47 53.1,273.67 54.1,274.16 55.1,274.27 56.1,273.19 57.1,273.02 58.1,272.74 59.1,274.14 60.1,274.97 61.1,275.19 62.1,275.52 63.1,274.78 64.1,275.49 65.1,274.89 66.1,273.8 67.1,273.73 68.1,274.94 69.1,275.26 70.1,274.16 71.1,273.86 72.1,273.53 73.1,274.54 74.1,274.16 75.1,274.04 76.1,273.54 77.1,272.59 78.1,273.55 79.1,275.17 80.1,274.58 81.1,274.04 82.1,273.06 83.1,273.02 84.1,273.33 85.1,275.11 86.1,275.35 87.1,275.18 88.1,275.19 88.75,274.52 88.75,274.3 88.75,180 90.5,178.5 91.1,109.17 91.72,112.24 92.35,117.4 92.97,121.6 93.6,123.67 94.22,122.49 94.85,119.69 95.47,116.42 96.1,115.68 96.72,117.03 97.35,120.4 97.97,123.09 98.6,123.26 99.22,122.23 99.85,119.9 100.47,117.83 101.1,117.41 101.72,118.58 102.35,120.11 102.97,121.1 103.6,121.57 104.22,120.04 104.85,118.87 105.47,118.14 106.1,117.81 106.72,118.6 107.35,119.98 107.97,121.22 108.6,120.85 109.22,121.38 109.85,120.34 110.47,119.59 111.1,119.27 111.72,119.2 112.35,120.16 112.97,120.75 113.6,121.74 114.22,120.82 114.85,119.93 115.47,119.21 116.1,118.83 116.72,119.42 117.35,120.02 117.97,120.83 118.6,121.33 119.22,120.97 119.85,120.54 120.47,119.7 121.1,120.5 122.1,121.25 123.1,122 124.1,122.29 125.1,120.67 126.1,119.4 127.1,120.01 128.1,122.09 129.1,122.52 130.1,121.42 131.1,120.88 132.1,120.26 133.1,120.28 134.1,120.17 135.1,119.23 136.1,119.99 137.1,120.11 138.1,120.78 139.1,122.04 140.1,121.18 141.1,120.28 142.1,120.56 143,120.53 143,120.8 143,222 144.5,223.5 145.1,289.53 145.72,283.99 146.35,278.72 146.97,274.28 147.6,272.45 148.22,273.24 148.85,276.4 149.47,279.13 150.1,280.54 150.72,278.73 151.35,275.91 151.97,272.84 152.6,272.16 153.22,274.23 153.85,277.11 154.47,278.78 155.1,279.08 155.72,277.69 156.35,275.35 156.97,273.05 157.6,272.76 158.22,273.54 158.85,275.18 159.47,277.04 160.1,278.1 160.72,277.28 161.35,275.57 161.97,273.8 162.6,272.16 163.22,273.05 163.85,274.29 164.47,275.36 165.1,275.15 165.72,274.55 166.35,273.48 166.97,272.44 167.6,271.97 168.22,272.73 168.85,273.89 169.47,274.77 170.1,275.06 170.72,275.13 171.35,274.7 171.97,273.03 172.6,273.04 173.22,273.38 173.85,273.82 174.47,274.47 175.1,274.43 176.1,273.44 177.1,273.31 178.1,273.14 179.1,274.63 180.1,275.41 181.1,274.81 182.1,274.66 183.1,274.8 184.1,274.16 185.1,273.63 186.1,273.99 187.1,274.15 188.1,275.25 189.1,275.99 190.1,275.39 191.1,275.54 192.1,274.63 193.1,273.59 194.1,273.38 195.1,273.78 196.1,273.23 197.1,273.06 198.1,274.15 199.1,273.67 200.1,273.24 201.1,274.7 202.1,275.17 203.1,275.65 204.1,275.57 205.1,275.01 206.1,274.97 207.1,274.77 208.1,274.53 209.1,274.97 210.1,275.16 211.1,275.65 212.1,274.45 212.5,274.22 212.5,274.3 212.5,181 214.25,179.5 214.85,109.21 215.47,112.51 216.1,117.37 216.72,121.55 217.35,123.5 217.97,121.71 218.6,119.12 219.22,115.73 219.85,114.62 220.47,115.73 221.1,117.74 221.72,120.67 222.35,121.62 222.97,120.7 223.6,119.55 224.22,117.01 224.85,116.77 225.47,118.22 226.1,120.25 226.72,121.93 227.35,122.83 227.97,122.05 228.6,120.11 229.22,117.34 229.85,116.74 230.47,116.99 231.1,118.95 231.72,121.26 232.35,121.9 232.97,121.22 233.6,119.87 234.22,118.56 234.85,117.45 235.47,118.07 236.1,119.03 236.72,120.02 237.35,121.2 237.97,121.26 238.6,121.1 239.22,120.6 239.85,120.52 240.47,120.49 241.1,121.35 241.72,122 242.35,121.36 242.97,121.05 243.6,120.55 244.22,120.07 244.85,119.45 245.85,120.58 246.85,121.94 247.85,121.57 248.85,119.85 249.85,118.2 250.85,119.52 251.85,120.88 252.85,121.11 253.85,119.59 254.85,119.59 255.85,119.62 256.85,119.6 257.85,121.22 258.85,121.68 259.85,120.81 260.85,122 261.85,121.53 262.85,121.13 263.85,121.31 264.85,121.38 265.85,121.06 266.25,121 266.25,120.8 266.25,224 268,225.5 268.6,289.93 269.23,284.06 269.85,278.19 270.48,273.67 271.1,272 271.73,273.39 272.35,275.41 272.98,278.46 273.6,279.54 274.23,278.12 274.85,276.09 275.48,274.11 276.1,273.11 276.73,273.77 277.35,276.99 277.98,278.98 278.6,279.97 279.23,278.17 279.85,276.18 280.48,273.76 281.1,273.51 281.73,273.53 282.35,274.88 282.98,276.56 283.6,277.38 284.23,276.53 284.85,274.79 285.48,273.6 286.1,274.21 286.73,274.05 287.35,274.93 287.98,274.99 288.6,275.12 289.23,275.53 289.85,274.43 290.48,273.31 291.1,273.57 291.73,273.39 292.35,274.23 292.98,274.35 293.6,275.98 294.23,275.28 294.85,275.69 295.48,274.43 296.1,273.83 296.73,274.21 297.35,275.25 297.98,275.47 298.6,275.75 299.6,275.49 300.6,273.37 301.6,272.45 302.6,274.15 303.6,275.28 304.6,275.11 305.6,274.54 306.6,274.07 307.6,274.37 308.6,273.75 309.6,273.52 310.6,272.58 311.6,272.73 312.6,272.88 313.6,273.63 314.6,273.32 315.6,274.12 316.6,274.54 317.6,274.33 318.6,274.02 319.6,274.18 320.6,274.09 321.6,275.54 322.6,274.8 323.6,274.37 324.6,274.31 325.6,273.38 326.6,273.39 327.6,273.71 328.6,274.04 329.6,273.16 330.6,273.6 331.6,273.97 332.6,274.36 333.6,273.67 334.6,272.96 335.6,273.24 336.6,274.04 337,274.32 337,274.3 337,180 339.5,178.5 340.1,105.17 340.73,111.23 341.35,116.21 341.98,120.44 342.6,122.09 343.23,121.64 343.85,118.67 344.48,115.59 345.1,114.38 345.73,115.86 346.35,118.92 346.98,121.87 347.6,122.67 348.23,122.06 348.85,119.7 349.48,118.14 350.1,117.26 350.73,117.68 351.35,119.39 351.98,122.07 352.6,122.17 353.23,121.45 353.85,119.57 354.48,118.56 355.1,118.31 355.73,119.21 356.35,120.43 356.98,122.15 357.6,122.15 358.23,121.62 358.85,119.92 359.48,118.79 360.1,117.81 360.73,118.21 361.35,119.54 361.98,120.43 362.6,121.08 363.23,120.44 363.85,119.54 364.48,118.41 365.1,118.09 365.73,118.62 366.35,118.98 366.98,119.75 367.6,120.73 368.23,119.56 368.85,119.45 369.48,118.96 370.1,118.41 371.1,120.32 372.1,121.5 373.1,121.33 374.1,120.48 375.1,120 376.1,120.24 377.1,121.88 378.1,122.02 379.1,121.64 380.1,121.29 381.1,121.91 382.1,122.4 383.1,122.68 384.1,121.93 385.1,121.34 386.1,120.85 387.1,120.36 388.1,119.61 389.1,119.57 390.1,119.87 391.1,121.45 391.5,121.24 391.5,120.8 391.5,156 393,157.5 393.6,290.06 394.23,284.2 394.85,278.51 395.48,274.18 396.1,272.25 396.73,272.95 397.35,276.74 397.98,279.56 398.6,280.19 399.23,278.75 399.85,275.94 400.48,272.55 401.1,271.96 401.73,272.2 402.35,274.02 402.98,276.52 403.6,277.94 404.23,276.63 404.85,275.29 405.48,273.77 406.1,272.75 406.73,273.61 407.35,275.36 407.98,277.06 408.6,277.59 409.23,276.65 409.85,275.21 410.48,273.28 411.1,272.91 411.73,273.82 412.35,275.86 412.98,276.87 413.6,277.6 414.23,276.09 414.85,274.55 415.48,273.26 416.1,273.14 416.73,273.58 417.35,274.53 417.98,275.06 418.6,275.62 419.23,275.14 419.85,274.25 420.48,273.27 421.1,274.02 421.73,273.95 422.35,275.68 422.98,276.27 423.6,275.53 424.6,275.21 425.6,274.81 426.6,275.24 427.6,274.6 428.6,273.88 429.6,273.57 430.6,274.16 431.6,273.92 432.6,275.34 433.6,275.53 434.6,275.59 435.6,275.36 436.6,273.82 437.6,274.3 438.6,274.35 439.6,274.51 440.6,274.39 441.6,274.54 442.6,275.22 443.6,273.98 444.6,273.04 445.6,273.63 446.6,274.89 447.6,275.18 448.6,275.23 449.6,274.73 450.6,274.53 451.6,274.68 452.6,275.7 453.6,274.59 454.6,274.37 455.6,273.97 456.6,273.78 457.6,275.26 458.6,275.59 459.6,276.13 460.6,274.73 461.6,274.18 462,274.16 462,274.3 462,182 463.75,180.5 464.35,105.49 464.98,111.59 465.6,116.64 466.23,120.64 466.85,122.37 467.48,121.07 468.1,117.93 468.73,115.22 469.35,114.83 469.98,115.41 470.6,118.58 471.23,120.34 471.85,121.39 472.48,120.7 473.1,118.25 473.73,116.7 474.35,116.95 474.98,118.29 475.6,120.46 476.23,121.99 476.85,122.78 477.48,121.79 478.1,119.39 478.73,117.66 479.35,116.13 479.98,117.36 480.6,118.62 481.23,120.35 481.85,120.75 482.48,120.41 483.1,119.6 483.73,119.98 484.35,119.03 484.98,119.26 485.6,119.64 486.23,120.02 486.85,121.01 487.48,121.14 488.1,119.76 488.73,119.47 489.35,118.81 489.98,119.52 490.6,120.28 491.23,120.81 491.85,121.01 492.48,120.6 493.1,120.43 493.73,119.22 494.35,118.61 495.35,119.91 496.35,121.13 497.35,120.68 498.35,119.6 499.35,119.3 500.35,119.77 501.35,120.79 502.35,120.88 503.35,120.93 504.35,120.93 505.35,121.66 506.35,122.35 507.35,121.13 508.35,119.21 509.35,119.2 510.35,119.89 511.35,119.99 512.35,119.62 513.35,119.2 514.35,119.82 515.5,120.85 515.5,120.8 515.5,225 517,226.5 517.6,290.47 518.23,283.64 518.85,278.24 519.48,273.88 520.1,272.31 520.73,272.91 521.35,276.05 521.98,279.04 522.6,280.14 523.23,278.81 523.85,276.49 524.48,273.87 525.1,273.21 525.73,273.71 526.35,276.27 526.98,278.56 527.6,278.9 528.23,276.89 528.85,274.77 529.48,272.75 530.1,272.92 530.73,274.75 531.35,275.89 531.98,276.9 532.6,276.95 533.23,275.14 533.85,273.6 534.48,272.35 535.1,272.33 535.73,273.15 536.35,274.76 536.98,275.81 537.6,276.25 538.23,275.98 538.85,274.66 539.48,273.83 540.1,272.59 540.73,273.37 541.35,273.4 541.98,274.76 542.6,274.99 543.23,274.38 543.85,273.47 544.48,272.68 545.1,272.6 545.73,272.86 546.35,272.99 546.98,273.96 547.6,274.97 548.6,274.69 549.6,273.46 550.6,273.3 551.6,274.68 552.6,274.68 553.6,274.05 554.6,272.93 555.6,273.67 556.6,274.77 557.6,275.85 558.6,275.13 559.6,274.4 560.6,274.51 561.6,275.84 562.6,276.09 563.6,275.61 564.6,274.41 565.6,274.25 566.6,274.83 567.6,275.23 568.6,275.06 569.6,275.03 570.6,275.07 571.6,273.94 572.6,273.18 573.6,273.77 574.6,274.06 575.6,274.27 576.6,273.81 577.6,274.31 578.6,273.87 579.6,273.4 580.6,273.37 581.6,274.63 582.6,274.68 583.6,275.7 584.25,274.66 584.25,274.3 584.25,180 586.5,178.5 587.1,105.33 587.73,110.69 588.35,116.68 588.98,120.52 589.6,122.9 590.23,121.22 590.85,117.89 591.48,115.03 592.1,114.36 592.73,116.08 593.35,119.31 593.98,121.31 594.6,122.83 595.23,121.94 595.85,120.72 596.48,117.79 597.1,116.96 597.73,117.97 598.35,120.27 598.98,122.45 599.6,122.89 600.23,121.68 600.85,119.97 601.48,118.06 602.1,116.66 602.73,117.16 603.35,119.61 603.98,121.02 604.6,120.99 605.23,121.38 605.85,120.17 606.48,119.33 607.1,118.93 607.73,118.74 608.35,119.16 608.98,119.95 609.6,120.68 610.23,121.29 610.85,119.91 611.48,120.05 612.1,118.65 612.73,118.91 613.35,119.96 613.98,121 614.6,121.3 615.23,120.94 615.85,120.86 616.48,119.92 617.1,120.09 618.1,119.85 619.1,120.77 620.1,121 621.1,119.93 622.1,120.51 623.1,121.62 624.1,122.38 625.1,121.29 626.1,119.99 627.1,119.44 628.1,121.12 629.1,121.37 630.1,121.84 631.1,121.46 632.1,120.33 633.1,120.28 634.1,121.76 635.1,121.93 636.1,121.43 637.1,121.76 637.5,121.25 637.5,120.8 637.5,224 638.75,225.5 639.35,289.82 639.98,283.77 640.6,277.72 641.23,274.01 641.85,272.29 642.48,272.95 643.1,275.95 643.73,277.53 644.35,278.86 644.98,278.03 645.6,276.07 646.23,273.55 646.85,271.62 647.48,272.07 648.1,274.12 648.73,276.37 649.35,277.64 649.98,275.99 650.6,274.61 651.23,272.69 651.85,272.11 652.48,272.93 653.1,274.81 653.73,276.49 654.35,277.39 654.98,276.74 655.6,275.12 656.23,272.49 656.85,271.59 657.48,272.63 658.1,273.38 658.73,274.38 659.35,274.76 659.98,274.76 660.6,273.4 661.23,272.99 661.85,272.56 662.48,273.2 663.1,273.57 663.73,274.45 664.35,275.03 664.98,275.25 665.6,274.8 666.23,274.01 666.85,273.81 667.48,274.67 668.1,275.72 668.73,275.83 669.35,275.51 670.35,274.2 671.35,273.71 672.35,273.89 673.35,275.69 674.35,275.82 675.35,275.18 676.35,273.71 677.35,273.9 678.35,274.07 679.35,274.31 680.35,273.42 681.35,272.48 682.35,273.76 683.35,274.5 684.35,274.77 685.35,274.77 686.35,275.07 687.35,274.71 688.35,274.34 689.35,274.25 690.35,273.74 691.35,274.77 692.35,274.63 693.35,274.92 694.35,275.05 695.35,274.35 696.35,273.63 697.35,272.76 698.35,273.37 699.35,273.21 700.35,272.87 701.35,273.44 702.35,273.41 703.35,274.17 704.35,273.52 705.35,273.73 706.35,273.12 707.5,273.74 707.5,274.3 707.5,183 709.5,181.5 710.1,103.66 710.73,110.5 711.35,116.62 711.98,120.36 712.6,122.79 713.23,121.89 713.85,118.8 714.48,116.44 715.1,114.98 715.73,115.97 716.35,118.28 716.98,121.05 717.6,122.55 718.23,121.63 718.85,119.72 719.48,117.74 720.1,117.12 720.73,117.39 721.35,119.6 721.98,121.78 722.6,123.45 723.23,122.76 723.85,120.24 724.48,118.26 725.1,117.59 725.73,118.16 726.35,119.6 726.98,120.29 727.6,120.69 728.23,120.56 728.85,118.93 729.48,117.54 730.1,117.32 730.73,119.2 731.35,120.42 731.98,122.45 732.6,122.47 733.23,121.67 733.85,120.72 734.48,119.55 735.1,118.33 735.73,118.34 736.35,119.51 736.98,119.91 737.6,120.22 738.23,120.97 738.85,119.83 739.48,119.29 740.1,118.4 741.1,119.37 742.1,120.37 743.1,120.45 744.1,119.45 745.1,119.55 746.1,120.62 747.1,122.2 748.1,121.41 749.1,120.98 750.1,120.14 751.1,120.57 752.1,120.65 753.1,120.49 754.1,119.93 755.1,120.26 756.1,119.95 757.1,120.68 758.1,120.81 759.1,120.67 760.1,119.95 760.5,120.86 760.5,120.8 760.5,224 762,225.5 762.6,289.63 763.23,284.39 763.85,278.59 764.48,273.54 765.1,271.3 765.73,273.48 766.35,276.15 766.98,279.84 767.6,280.22 768.23,278.65 768.85,274.68 769.48,272.56 770.1,271.52 770.73,273.32 771.35,276.65 771.98,278.76 772.6,278.81 773.23,277.79 773.85,275.77 774.48,273.73 775.1,272.64 775.73,272.95 776.35,274.69 776.98,276.68 777.6,277.31 778.23,275.78 778.85,275.13 779.48,274.26 780.1,273.39 780.73,274.4 781.35,274.47 781.98,275.65 782.6,275.77 783.23,275.57 783.85,274.35 784.48,273.64 785.1,273.13 785.73,273.03 786.35,273.86 786.98,274.35 787.6,274.87 788.23,274.23 788.85,274.12 789.48,273.62 790.1,273.62 790.73,275.06 791.35,276.26 791.98,276.64 792.6,276.61 793.6,275.97 794.6,273.52 795.6,272.5 796.6,274.24 797.6,274.93 798.6,274.74 799.6,273.9 800.6,273.29 801.6,274.38 802.6,274.01 803.6,274.08 804.6,273.49 805.6,273.68 806.6,274.18 807.6,275.4 808.6,275.46 809.6,275.6 810.6,274.69 811.6,275.47 812.6,275.33 813.6,274.55 814.6,274.32 815.6,273.85 816.6,275.57 817.6,275.87 818.6,275.25 819.6,274.04 820.6,273.6 821.6,275.06 822.6,275.09 823.6,273.3 824.6,273.09 825.6,273.93 826.6,273.97 827.6,275.44 828.6,275.35 829,274.72 829,274.3 829,180 831,178.5 831.6,107.92 832.23,111.74 832.85,117.11 833.48,121.56 834.1,122.51 834.73,121.54 835.35,119.08 835.98,116.42 836.6,114.95 837.23,116.09 837.85,118.41 838.48,121.57 839.1,122.5 839.73,121.93 840.35,119.19 840.98,117.61 841.6,116.09 842.23,117.4 842.85,119.47 843.48,121 844.1,122.11 844.73,120.87 845.35,119.02 845.98,117.57 846.6,116.09 847.23,117.84 847.85,119.6 848.48,121.39 849.1,122.9 849.73,121.71 850.35,120.94 850.98,119.12 851.6,118.36 852.23,119.39 852.85,120.31 853.48,121.2 854.1,122.34 854.73,121.37 855.35,121.31 855.98,119.93 856.6,119.96 857.23,120.69 857.85,121.17 858.48,121.78 859.1,121.35 859.73,120.31 860.35,119.37 860.98,119.13 861.6,119.7 862.6,120.74 863.6,122.13 864.6,122.79 865.6,121.11 866.6,120.7 867.6,120.79 868.6,119.84 869.6,119.46 870.6,119.28 871.6,118.73 872.6,119.31 873.6,119.69 874.6,119.95 875.6,119.35 876.6,118.91 877.6,119.85 878.6,120.57 879.6,120.7 880.6,121.08 881.75,120.64 881.75,120.8 881.75,224 882.5,225.5 883.1,289.74 883.73,283.64 884.35,277.79 884.98,273.83 885.6,272.2 886.23,273.15 886.85,275.61 887.48,278.16 888.1,279.1 888.73,278.72 889.35,276.26 889.98,273.74 890.6,273.07 891.23,273.9 891.85,276.62 892.48,278.43 893.1,278.56 893.73,278.1 894.35,275.02 894.98,273.42 895.6,272.41 896.23,272.88 896.85,274.47 897.48,276.86 898.1,276.73 898.73,276.69 899.35,275.88 899.98,273.98 900.6,273.85 901.23,274.47 901.85,275.15 902.48,275.98 903.1,276.26 903.73,275.2 904.35,274.28 904.98,273.3 905.6,272.97 906.23,274.66 906.85,275.95 907.48,277 908.1,276.28 908.73,276.35 909.35,275 909.98,274.04 910.6,274.32 911.23,274.7 911.85,275.49 912.48,276.14 913.1,276.59 914.1,275.68 915.1,274.56 916.1,274.6 917.1,275.46 918.1,276.12 919.1,275.36 920.1,274.03 921.1,274.42 922.1,275.21 923.1,276 924.1,275.16 925.1,274.09 926.1,273.94 927.1,274.24 928.1,274.37 929.1,275.31 930.1,273.55 931.1,273.08 932.1,273.55 933.1,274.91 934.1,275.11 935.1,274.17 936.1,273.48 937.1,274.53 938.1,274.34 939.1,274.46 940.1,275.27 941.1,274.45 942.1,273.95 943.1,274.13 944.1,274.99 945.1,274.71 946.1,275.13 947.1,275.17 948.1,275.3 949.1,274.66 950.1,274.16 950.75,273.83 950.75,274.3 950.75,203 952.5,201.5 953.1,107.67 953.73,111.78 954.35,116.65 954.98,121.14 955.6,122.21 956.23,121.76 956.85,117.94 957.48,114.9 958.1,114.31 958.73,116.86 959.35,119.53 959.98,122.19 960.6,122.96 961.23,121.81 961.85,119.99 962.48,117.84 963.1,117.22 963.73,118.32 964.35,119.77 964.98,122.23 965.6,122.73 966.23,122.39 966.85,120.65 967.48,119.1 968.1,117.7 968.73,119.28 969.35,121.01 969.98,122.61 970.6,122.43 971.23,121.45 971.85,119.44 972.48,117.54 973.1,117.51 973.73,118.04 974.35,119.05 974.98,120.35 975.6,120.76 976.23,120.2 976.85,119.25 977.48,118.57 978.1,119.23 978.73,119.43 979.35,120.77 979.98,121.4 980.6,120.78 981.23,120.15 981.85,119.04 982.48,118.86 983.1,118.36 984.1,119.23 985.1,121.31 986.1,121.25 987.1,121.16 988.1,120.9 989.1,120.67 990.1,121.48 991.1,121.26 991.5,120.83" fill="none" stroke="#1a1aff" stroke-width="1.3" stroke-linejoin="round"/>
<polyline points="17.5,142.2 18.51,143.32 19.52,144.41 20.52,144.88 21.53,146.06 22.54,147.38 23.55,148.84 24.55,150.29 25.56,151.79 26.57,152.68 27.58,154.04 28.59,155.99 29.59,157.55 30.6,159.28 31.61,160.01 32.62,161.2 33.62,162.13 34.63,162.69 35.64,164.02 36.65,165.85 37.65,166.71 38.66,168.22 39.67,169.54 40.68,171.56 41.69,172.79 42.69,173.67 43.7,174.96 44.71,176.1 45.72,177.23 46.72,179.29 47.73,180.38 48.74,181.99 49.75,183.16 50.76,183.75 51.76,185.01 52.77,186.24 53.78,187.3 54.79,188.31 55.79,189.92 56.8,190.89 57.81,192.76 58.82,193.88 59.83,194.86 60.83,196.06 61.84,196.47 62.85,197.84 63.86,199.94 64.86,201.21 65.87,203.58 66.88,204.22 67.89,205.1 68.9,206.31 69.9,206.7 70.91,207.91 71.92,209.56 72.93,210.87 73.93,212.49 74.94,213.49 75.95,215.44 76.96,216.48 77.96,217.28 78.97,217.74 79.98,219.14 80.99,220.35 82,222.3 83,224.16 84.01,224.99 85.02,226.67 86.03,228.42 87.03,229.09 88.04,230.1 89.05,231.1 90.05,229.44 91.06,227.77 92.06,226.77 93.07,225.36 94.07,223.68 95.08,222.23 96.08,220.2 97.09,217.98 98.09,216.1 99.1,214.75 100.1,213.46 101.11,211.75 102.11,210.38 103.11,207.92 104.12,206.11 105.12,204.24 106.13,202.97 107.13,201.32 108.14,199.2 109.14,197.55 110.15,196.14 111.15,194.18 112.16,192.1 113.16,190.79 114.17,188.78 115.17,186.66 116.18,185.25 117.18,183.78 118.18,182.37 119.19,181.04 120.19,179.75 121.2,178.81 122.2,177.41 123.21,175.68 124.21,173.76 125.22,171.76 126.22,169.59 127.23,168.22 128.23,166.67 129.24,164.91 130.24,163.41 131.24,162.4 132.25,160.8 133.25,159.34 134.26,156.91 135.26,155.09 136.27,153.61 137.27,151.97 138.28,150.67 139.28,149.8 140.29,147.74 141.29,145.19 142.3,143.25 143.3,141.7 144.31,142.88 145.31,143.98 146.32,144.64 147.33,146.62 148.34,148.5 149.34,149.94 150.35,151.39 151.36,152.06 152.37,153.36 153.37,153.71 154.38,155.37 155.39,156.93 156.39,159.12 157.4,160.36 158.41,161.72 159.42,162.73 160.42,163.88 161.43,165.22 162.44,167 163.44,169 164.45,170.46 165.46,171.71 166.47,172.93 167.47,174.17 168.48,175.13 169.49,176.2 170.5,177.36 171.5,178.48 172.51,179.06 173.52,179.86 174.52,180.82 175.53,182.19 176.54,183.26 177.55,184.18 178.55,186.07 179.56,187.52 180.57,189 181.58,190.57 182.58,192.46 183.59,194.31 184.6,195.59 185.6,196.85 186.61,197.13 187.62,197.98 188.63,199.27 189.63,200.63 190.64,202.21 191.65,203.46 192.66,204.95 193.66,205.76 194.67,206.7 195.68,207.79 196.68,209.26 197.69,210.67 198.7,212.34 199.71,213.86 200.71,214.7 201.72,215.65 202.73,217.01 203.73,218.75 204.74,219.82 205.75,221.82 206.76,223.33 207.76,224.33 208.77,225.57 209.78,227.33 210.79,228.54 211.79,229.61 212.8,231.1 213.81,229.23 214.83,227.62 215.84,226.24 216.86,225.02 217.87,222.52 218.88,220.73 219.9,218.13 220.91,216.3 221.93,215.1 222.94,213.75 223.96,211.55 224.97,210.49 225.98,208.62 227,207.04 228.01,205.59 229.03,203.74 230.04,202.15 231.05,200.39 232.07,199.16 233.08,197.84 234.1,196.17 235.11,194.29 236.13,192.26 237.14,190.58 238.15,188.61 239.17,187.56 240.18,185.67 241.2,184.52 242.21,182.89 243.22,181.24 244.24,180.06 245.25,178.12 246.27,175.23 247.28,173.43 248.3,170.96 249.31,170.03 250.32,169.31 251.34,168.19 252.35,166.39 253.37,164.11 254.38,162.49 255.39,160.89 256.41,158.68 257.42,157.64 258.44,155.99 259.45,154.35 260.47,152.23 261.48,150.57 262.49,148.84 263.51,146.82 264.52,145.11 265.54,143.24 266.55,141.7 267.56,142.63 268.57,143.49 269.58,144.84 270.59,145.77 271.6,147.4 272.61,148.77 273.62,150.03 274.64,151.07 275.65,152.19 276.66,153.7 277.67,155.09 278.68,156.34 279.69,157.13 280.7,158.4 281.71,159.64 282.72,161.04 283.73,162.45 284.74,163.76 285.75,165.35 286.76,166.74 287.78,167.94 288.79,169.53 289.8,171.45 290.81,172.77 291.82,173.74 292.83,175.39 293.84,177.12 294.85,178.22 295.86,179.28 296.87,180.73 297.88,182.22 298.89,183.19 299.9,184.55 300.91,186.04 301.93,186.45 302.94,187.2 303.95,188.33 304.96,190.06 305.97,191.41 306.98,193 307.99,194.44 309,195.8 310.01,196.41 311.02,196.89 312.03,198.55 313.04,199.72 314.05,200.8 315.06,201.64 316.07,203.44 317.09,204.66 318.1,206.13 319.11,207.73 320.12,209.24 321.13,211.08 322.14,211.82 323.15,212.55 324.16,213.42 325.17,214.59 326.18,215.87 327.19,217.66 328.2,218.92 329.21,220.4 330.23,221.43 331.24,223.12 332.25,224.66 333.26,225.81 334.27,227.65 335.28,229.14 336.29,229.94 337.3,231.1 338.31,229.54 339.32,227.48 340.33,225.62 341.34,224.37 342.35,222.94 343.36,221.11 344.36,219.25 345.37,217.42 346.38,215.59 347.39,213.62 348.4,211.86 349.41,210.28 350.42,208.88 351.43,208.33 352.44,206.69 353.45,205.43 354.46,203.92 355.47,202.68 356.48,200.63 357.49,198.72 358.49,197.29 359.5,195.04 360.51,193.45 361.52,191.38 362.53,190.01 363.54,187.75 364.55,186.18 365.56,184.87 366.57,183.04 367.58,181.58 368.59,179.43 369.6,177.98 370.61,175.96 371.61,174.45 372.62,173.53 373.63,171.89 374.64,170 375.65,168.64 376.66,167.07 377.67,164.98 378.68,163.31 379.69,161.37 380.7,159.27 381.71,158.19 382.72,156.82 383.73,155.66 384.74,154.26 385.74,152.54 386.75,150.89 387.76,148.91 388.77,147.28 389.78,145.14 390.79,143.19 391.8,141.7 392.81,142.84 393.81,144.44 394.82,146.17 395.83,147.8 396.84,148.58 397.84,149.57 398.85,150.77 399.86,152.21 400.86,152.64 401.87,154.15 402.88,155.08 403.89,156.47 404.89,157.93 405.9,159.44 406.91,160.53 407.91,162.48 408.92,163.82 409.93,165.2 410.94,165.84 411.94,166.26 412.95,167.44 413.96,169.43 414.96,170.96 415.97,172.37 416.98,173.53 417.99,175.32 418.99,177.26 420,178.2 421.01,179.16 422.01,179.55 423.02,180.63 424.03,182.11 425.04,183.82 426.04,184.94 427.05,186.85 428.06,187.97 429.06,189.39 430.07,191.25 431.08,192.31 432.09,194.11 433.09,195.27 434.1,196.58 435.11,197.29 436.11,198.96 437.12,200.19 438.13,200.83 439.14,202.29 440.14,203.07 441.15,204.34 442.16,206.26 443.16,207.59 444.17,209 445.18,210.02 446.19,210.79 447.19,211.12 448.2,212.58 449.21,214.68 450.21,216.11 451.22,217.69 452.23,219.19 453.24,220.13 454.24,220.89 455.25,222.36 456.26,223.66 457.26,225.29 458.27,226.05 459.28,227.55 460.29,228.7 461.29,229.88 462.3,231.1 463.31,229.31 464.32,227.38 465.33,225.74 466.34,224.49 467.35,223.09 468.36,221.32 469.37,219.78 470.38,217.78 471.38,216.09 472.39,214.9 473.4,213.24 474.41,211.53 475.42,210.4 476.43,208.73 477.44,206.73 478.45,204.4 479.46,202.7 480.47,200.8 481.48,198.87 482.49,197.03 483.5,195.71 484.51,193.78 485.52,192.23 486.53,190.43 487.54,189.44 488.55,187.55 489.55,186.43 490.56,184.23 491.57,182.19 492.58,180.43 493.59,178.32 494.6,177.37 495.61,175.71 496.62,174.45 497.63,172.19 498.64,170.55 499.65,168.86 500.66,167.98 501.67,166.13 502.68,164.36 503.69,162.89 504.7,160.68 505.71,158.34 506.72,156.12 507.72,154.47 508.73,153.14 509.74,151.94 510.75,150.2 511.76,148.48 512.77,146.57 513.78,144.41 514.79,143.23 515.8,141.7 516.81,143.1 517.82,144.49 518.83,145.94 519.84,147.1 520.86,148.76 521.87,150.39 522.88,151.62 523.89,152.61 524.9,154.15 525.91,155.61 526.92,156.86 527.93,158.75 528.94,159.56 529.95,160.1 530.97,160.78 531.98,162.44 532.99,164.06 534,165.98 535.01,167.88 536.02,168.87 537.03,169.67 538.04,170.19 539.05,171.6 540.06,173.07 541.08,174.04 542.09,175.95 543.1,176.54 544.11,178.04 545.12,178.56 546.13,180.04 547.14,181.62 548.15,183.3 549.16,184.81 550.17,185.72 551.19,187.09 552.2,188.15 553.21,189.42 554.22,190.98 555.23,192.5 556.24,193.63 557.25,195.37 558.26,196.72 559.27,198.4 560.29,199.83 561.3,201.38 562.31,203.08 563.32,203.9 564.33,205.01 565.34,205.87 566.35,206.5 567.36,207.96 568.37,209.86 569.38,211.63 570.4,213.35 571.41,214.26 572.42,215.56 573.43,216.59 574.44,217.37 575.45,219.03 576.46,219.85 577.47,221.12 578.48,222.72 579.49,224.75 580.51,226.22 581.52,227.97 582.53,228.75 583.54,229.92 584.55,231.1 585.55,229.5 586.56,227.6 587.56,226.25 588.57,224.57 589.57,222.39 590.58,220.86 591.58,219.64 592.59,217.98 593.59,216.2 594.6,214.67 595.6,212.82 596.61,211.26 597.61,209.59 598.62,208.06 599.62,206.63 600.63,204.73 601.63,202.85 602.63,201.62 603.64,200.08 604.64,198.09 605.65,196.41 606.65,194.17 607.66,192.06 608.66,190.02 609.67,188.07 610.67,185.9 611.68,184.1 612.68,182.92 613.69,181.14 614.69,179.19 615.7,177.63 616.7,176.54 617.71,174.48 618.71,173.26 619.72,171.89 620.72,170.08 621.72,168.4 622.73,167.2 623.73,165.99 624.74,164.74 625.74,163.14 626.75,160.85 627.75,158.85 628.76,156.97 629.76,154.8 630.77,152.99 631.77,151.28 632.78,150 633.78,148.11 634.79,146.92 635.79,145.32 636.8,143.43 637.8,141.7 638.8,143.29 639.8,144.86 640.8,146.33 641.8,147.3 642.8,148.51 643.8,149.25 644.8,150.8 645.8,151.78 646.8,152.44 647.8,154.06 648.8,155.66 649.8,157.76 650.8,159.3 651.8,160.27 652.8,162.01 653.8,163.55 654.8,164.59 655.8,165.55 656.8,167.08 657.8,167.58 658.8,169.21 659.8,170.06 660.8,170.95 661.8,171.79 662.8,172.78 663.8,174.09 664.8,175.4 665.8,176.94 666.8,178.16 667.8,179.78 668.8,180.75 669.8,181.69 670.8,183.06 671.8,184.14 672.8,185.51 673.8,186.67 674.8,188.11 675.8,189.77 676.8,190.9 677.8,192.54 678.8,194.03 679.8,195.58 680.8,196.82 681.8,198.45 682.8,200.05 683.8,201.22 684.8,202.24 685.8,203.36 686.8,204.25 687.8,205.72 688.8,206.76 689.8,207.95 690.8,209.66 691.8,211.39 692.8,212.8 693.8,213.7 694.8,214.56 695.8,215.1 696.8,216.46 697.8,217.46 698.8,218.84 699.8,220.36 700.8,221.77 701.8,223.12 702.8,224.28 703.8,225.35 704.8,227.14 705.8,228.37 706.8,229.84 707.8,231.1 708.8,229.64 709.8,228.43 710.8,226.55 711.8,224.64 712.8,222.48 713.8,220.5 714.8,219.69 715.8,218.29 716.8,216.9 717.8,214.9 718.8,213.77 719.8,212.24 720.8,209.9 721.8,208 722.8,206.01 723.8,203.91 724.8,202.66 725.8,201.4 726.8,199.92 727.8,198.66 728.8,196.77 729.8,195.17 730.8,193.28 731.8,191.55 732.8,189.14 733.8,187.37 734.8,185.25 735.8,183.42 736.8,181.51 737.8,179.39 738.8,177.9 739.8,175.94 740.8,174.39 741.8,172.7 742.8,171.08 743.8,169.82 744.8,168.01 745.8,166.58 746.8,165.24 747.8,163.37 748.8,161.99 749.8,159.66 750.8,157.37 751.8,155.49 752.8,153.94 753.8,152.77 754.8,150.98 755.8,149.83 756.8,148.03 757.8,146.7 758.8,145.24 759.8,143.39 760.8,141.7 761.81,142.95 762.81,144.15 763.82,145.66 764.83,147.21 765.84,149.01 766.84,150.03 767.85,151.22 768.86,152.69 769.87,153.88 770.87,154.65 771.88,156.15 772.89,157.44 773.9,158.78 774.9,160.07 775.91,161.7 776.92,163.04 777.92,164.43 778.93,165.54 779.94,167.1 780.95,168.26 781.95,169.58 782.96,170.14 783.97,171.85 784.98,173.08 785.98,173.9 786.99,175.03 788,176.93 789.01,178.14 790.01,180.13 791.02,181.14 792.03,182.32 793.04,183.15 794.04,183.89 795.05,184.97 796.06,186.37 797.06,187.92 798.07,189.15 799.08,190.6 800.09,192.19 801.09,193.86 802.1,195.16 803.11,196.49 804.12,197.24 805.12,199.16 806.13,200.51 807.14,202.53 808.15,203.89 809.15,205.11 810.16,205.81 811.17,206.43 812.17,208 813.18,209.49 814.19,211.2 815.2,212.85 816.2,214.43 817.21,215.92 818.22,216.78 819.23,218.33 820.23,219.34 821.24,220.75 822.25,221.58 823.26,223.65 824.26,224.71 825.27,226.32 826.28,227.38 827.29,228.32 828.29,229.65 829.3,231.1 830.31,229.04 831.33,227.09 832.34,225.33 833.36,223.15 834.37,221.79 835.39,220.25 836.4,218.66 837.42,216.54 838.43,215.11 839.44,213.66 840.46,211.72 841.47,210.06 842.49,209.04 843.5,206.79 844.52,205.07 845.53,202.96 846.55,201.06 847.56,199.89 848.57,198.4 849.59,196.91 850.6,195.45 851.62,193.86 852.63,192.18 853.65,190.05 854.66,188.66 855.67,186.61 856.69,185.37 857.7,183.63 858.72,182.06 859.73,180.28 860.75,178.42 861.76,176.1 862.78,174.25 863.79,171.94 864.8,169.95 865.82,168.63 866.83,167.77 867.85,166.09 868.86,164.58 869.88,162.96 870.89,161.15 871.91,159.27 872.92,157.9 873.93,156.54 874.95,154.33 875.96,151.89 876.98,149.64 877.99,148 879.01,146.03 880.02,144.39 881.04,143.07 882.05,141.7 883.05,142.99 884.05,144.39 885.05,146.06 886.05,147.7 887.05,148.74 888.05,149.89 889.05,150.74 890.05,151.99 891.05,152.86 892.05,153.65 893.05,155.98 894.05,157.44 895.05,159.36 896.05,160.81 897.05,161.68 898.05,162.78 899.05,164.55 900.05,165.4 901.05,166.69 902.05,167.75 903.05,169.33 904.05,170.84 905.05,171.99 906.05,173.43 907.05,174.44 908.05,175.91 909.05,176.89 910.05,178.36 911.05,179.51 912.05,180 913.05,181.5 914.05,182.41 915.05,183.43 916.05,184.5 917.05,185.87 918.05,187.23 919.05,188.77 920.05,190.22 921.05,191.92 922.05,193.84 923.05,194.94 924.05,196.51 925.05,197.01 926.05,198.35 927.05,199.51 928.05,200.28 929.05,201.83 930.05,203.22 931.05,203.98 932.05,205.24 933.05,206.77 934.05,207.91 935.05,209.57 936.05,211.27 937.05,213.02 938.05,214.26 939.05,216.32 940.05,217.57 941.05,219.47 942.05,220.74 943.05,221.31 944.05,223.02 945.05,223.28 946.05,224.1 947.05,225.23 948.05,226.03 949.05,228.05 950.05,229.6 951.05,231.1 952.07,229.25 953.09,227.72 954.11,226.56 955.13,224.89 956.15,222.66 957.17,220.18 958.18,218.16 959.2,216.77 960.22,215.27 961.24,214.28 962.26,212.88 963.28,210.7 964.3,208.84 965.32,206.34 966.34,204.84 967.36,203.61 968.38,201.81 969.4,200.24 970.42,198.94 971.43,197.47 972.45,195.92 973.47,194.15 974.49,192.64 975.51,191.23 976.53,188.88 977.55,186.74 978.57,184.15 979.59,182.11 980.61,180.8 981.63,179.65 982.65,178.43 983.67,176.92 984.68,175.19 985.7,173.49 986.72,172.44 987.74,170.5 988.76,168.19 989.78,166.3 990.8,164.3" fill="none" stroke="#ff00ff" stroke-width="1.5" stroke-linejoin="round"/>
<path d="M207.6 5H217.5L212.4 14.4Z" fill="#0050ff"/>
<path d="M17.2 130.9H23.1L17.2 140.6Z" fill="#0050ff"/>
<path d="M89 232L94.5 242.5H83.5Z" fill="#0060ff"/>
<path d="M971.7 188L979.6 183.8V192.2Z M979 187.2H992V188.8H979Z" fill="#0a1ee6"/>
<circle cx="11.3" cy="207.6" r="8.1" fill="#0000ff" stroke="#4e4c3c" stroke-width="1.9"/>
<path d="M19 206.6H23.6V202.9L30.6 207.8L23.6 212.7V209H19Z" fill="#0000ff"/>
<path d="M11.9 203.2V211.8M11.9 203.4L9.2 206" stroke="#c4c4ff" stroke-width="1.9" fill="none"/>
<circle cx="11.26" cy="373.35" r="8.6" fill="#ff00ff" stroke="#0a62ff" stroke-width="2"/>
<path d="M19 372.1H23.8V368.4L30.9 373.35L23.8 378.3V374.5H19Z" fill="#ff00ff"/>
<text x="11.26" y="377.4" font-family="Liberation Sans" font-size="11" fill="#ffe0ff" text-anchor="middle">4</text>
<text transform="translate(29.6 197.7) scale(0.8 1)" font-family="Liberation Sans" font-weight="bold" font-size="12.2" fill="#0a0af0">SW</text>
<text transform="translate(34 353.9) scale(0.85 1)" font-family="Liberation Sans" font-size="12.4" fill="#ff10ff">IL</text>
</svg>
<div class="box" style="left:21.1px;top:421.7px;width:272.2px;height:44.1px;border-radius:6px"></div>
<div class="pill" style="left:30.4px;top:429.4px;width:30.8px;height:12.8px"><div class="pin" style="background:linear-gradient(#0000ff, #1a1aff 40%, #6868e0)"></div><div class="ptx" style="font-size:9.2px;top:2.98px">C1</div></div>
<div class="pill" style="left:30.4px;top:449.8px;width:30.8px;height:12.8px"><div class="pin" style="background:linear-gradient(#ff00ff, #f818f8 40%, #e070e0)"></div><div class="ptx" style="font-size:9.2px;top:2.98px">C4</div></div>
<div class="t" style="left:66px;top:429.53px;font-size:11.5px;line-height:11.5px;color:#1a1a1a;font-weight:bold;letter-spacing:0.3px">5.0V/div</div>
<div class="t" style="left:66px;top:449.73px;font-size:11.5px;line-height:11.5px;color:#1a1a1a;font-weight:bold;letter-spacing:0.3px">1.0A/div</div>
<div class="t" style="left:178.5px;top:429.53px;font-size:11.5px;line-height:11.5px;color:#1a1a1a;font-weight:bold;letter-spacing:0.3px">1M&Omega;</div>
<div class="t" style="left:210.3px;top:428.82px;font-size:8.8px;line-height:8.8px;color:#1a1a1a;font-weight:bold;letter-spacing:0px">B</div>
<div class="t" style="left:215.2px;top:433.35px;font-size:10.3px;line-height:10.3px;color:#1a1a1a;font-weight:bold;letter-spacing:0px">W</div>
<div class="t" style="left:224.8px;top:429.53px;font-size:11.5px;line-height:11.5px;color:#1a1a1a;font-weight:bold;letter-spacing:0.3px">:20.0M</div>
<div class="t" style="left:178.5px;top:449.73px;font-size:11.5px;line-height:11.5px;color:#1a1a1a;font-weight:bold;letter-spacing:0.3px">1M&Omega;</div>
<div class="t" style="left:210.3px;top:449.02px;font-size:8.8px;line-height:8.8px;color:#1a1a1a;font-weight:bold;letter-spacing:0px">B</div>
<div class="t" style="left:215.2px;top:453.55px;font-size:10.3px;line-height:10.3px;color:#1a1a1a;font-weight:bold;letter-spacing:0px">W</div>
<div class="t" style="left:224.8px;top:449.73px;font-size:11.5px;line-height:11.5px;color:#1a1a1a;font-weight:bold;letter-spacing:0.3px">:20.0M</div>
<div class="box" style="left:298.8px;top:421.7px;width:131.4px;height:89.3px;border-radius:6px"></div>
<div class="pill" style="left:307.5px;top:430.3px;width:34.5px;height:14px"><div class="pin" style="background:linear-gradient(#0000ff, #1a1aff 40%, #6868e0)"></div><div class="ptx" style="font-size:9px;top:3.15px">t1</div></div>
<div class="pill" style="left:307.5px;top:450.6px;width:34.5px;height:14px"><div class="pin" style="background:linear-gradient(#0000ff, #1a1aff 40%, #6868e0)"></div><div class="ptx" style="font-size:9px;top:3.15px">t2</div></div>
<div class="pill" style="left:307.5px;top:470.9px;width:34.5px;height:14px"><div class="pin" style="background:linear-gradient(#0000ff, #1a1aff 40%, #6868e0)"></div><div class="ptx" style="font-size:9px;top:3.15px">&Delta;t</div></div>
<div class="pill" style="left:307.5px;top:491.2px;width:34.5px;height:14px"><div class="pin" style="background:linear-gradient(#0000ff, #1a1aff 40%, #6868e0)"></div><div class="ptx" style="font-size:9px;top:3.15px">1/&Delta;t</div></div>
<div class="ctab" style="left:344px;top:428px;width:84px;height:83px"></div>
<div class="hl" style="left:344px;top:448px;width:84px"></div>
<div class="hl" style="left:344px;top:469px;width:84px"></div>
<div class="hl" style="left:344px;top:489px;width:84px"></div>
<div class="t" style="left:345.9px;top:433.03px;font-size:11.5px;line-height:11.5px;color:#1a1a1a;font-weight:bold;letter-spacing:0.3px">2.48&micro;s</div>
<div class="t" style="left:345.9px;top:453.43px;font-size:11.5px;line-height:11.5px;color:#1a1a1a;font-weight:bold;letter-spacing:0.3px">3.56&micro;s</div>
<div class="t" style="left:345.9px;top:473.83px;font-size:11.5px;line-height:11.5px;color:#1a1a1a;font-weight:bold;letter-spacing:0.3px">1.08&micro;s</div>
<div class="t" style="left:345.9px;top:494.23px;font-size:11.5px;line-height:11.5px;color:#1a1a1a;font-weight:bold;letter-spacing:0.3px">925.926kHz</div>
<div class="box" style="left:576.5px;top:422px;width:180px;height:21.5px;border-radius:6px"></div>
<div style="position:absolute;left:583px;top:429px;width:15px;height:14px;box-sizing:border-box;background:#2e2a26;border:1.2px solid #1a7aff"></div>
<div class="t" style="left:583.7px;top:429.53px;font-size:11.5px;line-height:11.5px;color:#f0f0f0;font-weight:bold;letter-spacing:0.3px">A</div>
<div style="position:absolute;left:593.6px;top:431px;width:1.6px;height:4px;background:#e8e8e8;transform:skewX(-15deg)"></div>
<div class="pill" style="left:600.5px;top:429.5px;width:31.5px;height:12.8px"><div class="pin" style="background:linear-gradient(#0000ff, #1a1aff 40%, #6868e0)"></div><div class="ptx" style="font-size:9.2px;top:2.98px">C1</div></div>
<svg style="position:absolute;left:633px;top:427px" width="18" height="18"><path d="M2.5 14.3H6.5L11.5 3.2H15.5" stroke="#111" stroke-width="2" fill="none"/></svg>
<div class="t" style="left:650.9px;top:429.53px;font-size:11.5px;line-height:11.5px;color:#1a1a1a;font-weight:bold;letter-spacing:0.3px">2.4V</div>
<div class="box" style="left:762.2px;top:421.8px;width:223.2px;height:88.7px;border-radius:6px"></div>
<div class="t" style="left:769.3px;top:429.53px;font-size:11.5px;line-height:11.5px;color:#1a1a1a;font-weight:bold;letter-spacing:0.3px">2.0&micro;s/div</div>
<div class="t" style="left:833.1px;top:429.53px;font-size:11.5px;line-height:11.5px;color:#1a1a1a;font-weight:bold;letter-spacing:0.3px">50.0MS/s</div>
<div class="t" style="left:915.7px;top:429.53px;font-size:11.5px;line-height:11.5px;color:#1a1a1a;font-weight:bold;letter-spacing:0.3px">20.0ns/pt</div>
<div class="t" style="left:769.3px;top:449.53px;font-size:11.5px;line-height:11.5px;color:#2ee6f2;font-weight:bold;letter-spacing:0.3px">Stopped</div>
<svg style="position:absolute;left:964px;top:447px" width="14" height="20"><path d="M6.3 4V13" stroke="#0a0ad0" stroke-width="3.6" stroke-linecap="round"/><circle cx="6.3" cy="15" r="3.4" fill="#0a0ad0"/></svg>
<div class="t" style="left:769.3px;top:470.12px;font-size:11.5px;line-height:11.5px;color:#1a1a1a;font-weight:bold;letter-spacing:0.3px">3 154 acqs</div>
<div class="t" style="left:906.1px;top:470.12px;font-size:11.5px;line-height:11.5px;color:#1a1a1a;font-weight:bold;letter-spacing:0.3px">RL:1.0k</div>
<div class="t" style="left:769.3px;top:491.03px;font-size:11.5px;line-height:11.5px;color:#1a1a1a;font-weight:bold;letter-spacing:0.3px">Auto</div>
<div class="t" style="left:810.3px;top:491.03px;font-size:11.5px;line-height:11.5px;color:#1a1a1a;font-weight:bold;letter-spacing:0.3px">July 14, 2024</div>
<div class="t" style="left:932px;top:491.03px;font-size:11.5px;line-height:11.5px;color:#1a78f0;font-weight:bold;letter-spacing:0.3px">22:50:33</div>
<div class="box" style="left:21.2px;top:521.5px;width:549.4px;height:179.4px;border-radius:6px"></div>
<div class="t th" style="left:125.4px;top:530.4px;width:68.1px;font-size:11.5px;line-height:12px;letter-spacing:0.3px">Value</div>
<div class="t th" style="left:193.5px;top:530.4px;width:78px;font-size:11.5px;line-height:12px;letter-spacing:0.3px">Mean</div>
<div class="t th" style="left:271.5px;top:530.4px;width:68.5px;font-size:11.5px;line-height:12px;letter-spacing:0.3px">Min</div>
<div class="t th" style="left:340px;top:530.4px;width:67.7px;font-size:11.5px;line-height:12px;letter-spacing:0.3px">Max</div>
<div class="t th" style="left:407.7px;top:530.4px;width:68.3px;font-size:11.5px;line-height:12px;letter-spacing:0.3px">St Dev</div>
<div class="t th" style="left:476px;top:530.4px;width:58.3px;font-size:11.5px;line-height:12px;letter-spacing:0.3px">Count</div>
<div class="t th" style="left:534.3px;top:530.4px;width:35.6px;font-size:11.5px;line-height:12px;letter-spacing:0.3px">Info</div>
<div style="position:absolute;left:194px;top:548px;width:77px;height:16px;background:#dadada"></div>
<div style="position:absolute;left:194px;top:566px;width:77px;height:17px;background:#dadada"></div>
<div style="position:absolute;left:194px;top:585px;width:77px;height:16px;background:#dadada"></div>
<div style="position:absolute;left:194px;top:603px;width:77px;height:17px;background:#dadada"></div>
<div style="position:absolute;left:194px;top:622px;width:77px;height:16px;background:#dadada"></div>
<div style="position:absolute;left:194px;top:640px;width:77px;height:17px;background:#dadada"></div>
<div style="position:absolute;left:194px;top:659px;width:77px;height:16px;background:#dadada"></div>
<div style="position:absolute;left:194px;top:677px;width:77px;height:17px;background:#dadada"></div>
<div style="position:absolute;left:341px;top:548px;width:66px;height:16px;background:#dadada"></div>
<div style="position:absolute;left:341px;top:566px;width:66px;height:17px;background:#dadada"></div>
<div style="position:absolute;left:341px;top:585px;width:66px;height:16px;background:#dadada"></div>
<div style="position:absolute;left:341px;top:603px;width:66px;height:17px;background:#dadada"></div>
<div style="position:absolute;left:341px;top:622px;width:66px;height:16px;background:#dadada"></div>
<div style="position:absolute;left:341px;top:640px;width:66px;height:17px;background:#dadada"></div>
<div style="position:absolute;left:341px;top:659px;width:66px;height:16px;background:#dadada"></div>
<div style="position:absolute;left:341px;top:677px;width:66px;height:17px;background:#dadada"></div>
<div class="hl" style="left:125px;top:547px;width:445px"></div>
<div class="hl" style="left:125px;top:565px;width:445px"></div>
<div class="hl" style="left:125px;top:584px;width:445px"></div>
<div class="hl" style="left:125px;top:602px;width:445px"></div>
<div class="hl" style="left:125px;top:621px;width:445px"></div>
<div class="hl" style="left:125px;top:639px;width:445px"></div>
<div class="hl" style="left:125px;top:658px;width:445px"></div>
<div class="hl" style="left:125px;top:676px;width:445px"></div>
<div class="hl" style="left:125px;top:695px;width:445px"></div>
<div class="vl" style="left:125px;top:547px;height:149px"></div>
<div class="vl" style="left:193px;top:547px;height:149px"></div>
<div class="vl" style="left:271px;top:547px;height:149px"></div>
<div class="vl" style="left:340px;top:547px;height:149px"></div>
<div class="vl" style="left:407px;top:547px;height:149px"></div>
<div class="vl" style="left:476px;top:547px;height:149px"></div>
<div class="vl" style="left:534px;top:547px;height:149px"></div>
<div class="vl" style="left:569px;top:547px;height:149px"></div>
<div class="pill" style="left:30px;top:548.6px;width:31.2px;height:12.8px"><div class="pin" style="background:linear-gradient(#0000ff, #1a1aff 40%, #6868e0)"></div><div class="ptx" style="font-size:9.2px;top:2.98px">C1</div></div>
<div class="t" style="left:68.4px;top:550.33px;font-size:11.5px;line-height:11.5px;color:#1a1a1a;font-weight:bold;letter-spacing:0.3px">Max</div>
<div class="t" style="left:127px;top:550.33px;font-size:11.5px;line-height:11.5px;color:#1a1a1a;font-weight:bold;letter-spacing:0.3px">12.8V</div>
<div class="t" style="left:195.1px;top:550.33px;font-size:11.5px;line-height:11.5px;color:#1a1a1a;font-weight:bold;letter-spacing:0.3px">12.702043</div>
<div class="t" style="left:273.1px;top:550.33px;font-size:11.5px;line-height:11.5px;color:#1a1a1a;font-weight:bold;letter-spacing:0.3px">12.4</div>
<div class="t" style="left:341.6px;top:550.33px;font-size:11.5px;line-height:11.5px;color:#1a1a1a;font-weight:bold;letter-spacing:0.3px">14.6</div>
<div class="t" style="left:409.3px;top:550.33px;font-size:11.5px;line-height:11.5px;color:#1a1a1a;font-weight:bold;letter-spacing:0.3px">109.1m</div>
<div class="t" style="left:477.6px;top:550.33px;font-size:11.5px;line-height:11.5px;color:#1a1a1a;font-weight:bold;letter-spacing:0.3px">3.154k</div>
<div class="pill" style="left:30px;top:567.12px;width:31.2px;height:12.8px"><div class="pin" style="background:linear-gradient(#0000ff, #1a1aff 40%, #6868e0)"></div><div class="ptx" style="font-size:9.2px;top:2.98px">C1</div></div>
<div class="t" style="left:68.4px;top:568.85px;font-size:11.5px;line-height:11.5px;color:#1a1a1a;font-weight:bold;letter-spacing:0.3px">Min</div>
<div class="t" style="left:127px;top:568.85px;font-size:11.5px;line-height:11.5px;color:#1a1a1a;font-weight:bold;letter-spacing:0.3px">-10.0V</div>
<div class="t" style="left:195.1px;top:568.85px;font-size:11.5px;line-height:11.5px;color:#1a1a1a;font-weight:bold;letter-spacing:0.3px">-10.018821</div>
<div class="t" style="left:273.1px;top:568.85px;font-size:11.5px;line-height:11.5px;color:#1a1a1a;font-weight:bold;letter-spacing:0.3px">-10.6</div>
<div class="t" style="left:341.6px;top:568.85px;font-size:11.5px;line-height:11.5px;color:#1a1a1a;font-weight:bold;letter-spacing:0.3px">-9.4</div>
<div class="t" style="left:409.3px;top:568.85px;font-size:11.5px;line-height:11.5px;color:#1a1a1a;font-weight:bold;letter-spacing:0.3px">88.37m</div>
<div class="t" style="left:477.6px;top:568.85px;font-size:11.5px;line-height:11.5px;color:#1a1a1a;font-weight:bold;letter-spacing:0.3px">3.154k</div>
<div class="pill" style="left:30px;top:585.65px;width:31.2px;height:12.8px"><div class="pin" style="background:linear-gradient(#0000ff, #1a1aff 40%, #6868e0)"></div><div class="ptx" style="font-size:9.2px;top:2.98px">C1</div></div>
<div class="t" style="left:68.4px;top:587.38px;font-size:11.5px;line-height:11.5px;color:#1a1a1a;font-weight:bold;letter-spacing:0.3px">Pk-Pk</div>
<div class="t" style="left:127px;top:587.38px;font-size:11.5px;line-height:11.5px;color:#1a1a1a;font-weight:bold;letter-spacing:0.3px">22.8V</div>
<div class="t" style="left:195.1px;top:587.38px;font-size:11.5px;line-height:11.5px;color:#1a1a1a;font-weight:bold;letter-spacing:0.3px">22.720864</div>
<div class="t" style="left:273.1px;top:587.38px;font-size:11.5px;line-height:11.5px;color:#1a1a1a;font-weight:bold;letter-spacing:0.3px">21.8</div>
<div class="t" style="left:341.6px;top:587.38px;font-size:11.5px;line-height:11.5px;color:#1a1a1a;font-weight:bold;letter-spacing:0.3px">24.6</div>
<div class="t" style="left:409.3px;top:587.38px;font-size:11.5px;line-height:11.5px;color:#1a1a1a;font-weight:bold;letter-spacing:0.3px">137.6m</div>
<div class="t" style="left:477.6px;top:587.38px;font-size:11.5px;line-height:11.5px;color:#1a1a1a;font-weight:bold;letter-spacing:0.3px">3.154k</div>
<div class="pill" style="left:30px;top:604.18px;width:31.2px;height:12.8px"><div class="pin" style="background:linear-gradient(#0000ff, #1a1aff 40%, #6868e0)"></div><div class="ptx" style="font-size:9.2px;top:2.98px">C1</div></div>
<div class="t" style="left:68.4px;top:605.9px;font-size:11.5px;line-height:11.5px;color:#1a1a1a;font-weight:bold;letter-spacing:0.3px">+DtyCyc</div>
<div class="t" style="left:127px;top:605.9px;font-size:11.5px;line-height:11.5px;color:#1a1a1a;font-weight:bold;letter-spacing:0.3px">43.63%</div>
<div class="t" style="left:195.1px;top:605.9px;font-size:11.5px;line-height:11.5px;color:#1a1a1a;font-weight:bold;letter-spacing:0.3px">43.54828</div>
<div class="t" style="left:273.1px;top:605.9px;font-size:11.5px;line-height:11.5px;color:#1a1a1a;font-weight:bold;letter-spacing:0.3px">39.02</div>
<div class="t" style="left:341.6px;top:605.9px;font-size:11.5px;line-height:11.5px;color:#1a1a1a;font-weight:bold;letter-spacing:0.3px">45.17</div>
<div class="t" style="left:409.3px;top:605.9px;font-size:11.5px;line-height:11.5px;color:#1a1a1a;font-weight:bold;letter-spacing:0.3px">339.2m</div>
<div class="t" style="left:477.6px;top:605.9px;font-size:11.5px;line-height:11.5px;color:#1a1a1a;font-weight:bold;letter-spacing:0.3px">3.154k</div>
<div class="pill" style="left:30px;top:622.7px;width:31.2px;height:12.8px"><div class="pin" style="background:linear-gradient(#ff00ff, #f818f8 40%, #e070e0)"></div><div class="ptx" style="font-size:9.2px;top:2.98px">C4</div></div>
<div class="t" style="left:68.4px;top:624.43px;font-size:11.5px;line-height:11.5px;color:#1a1a1a;font-weight:bold;letter-spacing:0.3px">Pk-Pk*</div>
<div class="t" style="left:127px;top:624.43px;font-size:11.5px;line-height:11.5px;color:#1a1a1a;font-weight:bold;letter-spacing:0.3px">2.24A</div>
<div class="t" style="left:195.1px;top:624.43px;font-size:11.5px;line-height:11.5px;color:#1a1a1a;font-weight:bold;letter-spacing:0.3px">2.2959154</div>
<div class="t" style="left:273.1px;top:624.43px;font-size:11.5px;line-height:11.5px;color:#1a1a1a;font-weight:bold;letter-spacing:0.3px">2.12</div>
<div class="t" style="left:341.6px;top:624.43px;font-size:11.5px;line-height:11.5px;color:#1a1a1a;font-weight:bold;letter-spacing:0.3px">2.6</div>
<div class="t" style="left:409.3px;top:624.43px;font-size:11.5px;line-height:11.5px;color:#1a1a1a;font-weight:bold;letter-spacing:0.3px">39.45m</div>
<div class="t" style="left:477.6px;top:624.43px;font-size:11.5px;line-height:11.5px;color:#1a1a1a;font-weight:bold;letter-spacing:0.3px">3.154k</div>
<div class="pill" style="left:30px;top:641.23px;width:31.2px;height:12.8px"><div class="pin" style="background:linear-gradient(#ff00ff, #f818f8 40%, #e070e0)"></div><div class="ptx" style="font-size:9.2px;top:2.98px">C4</div></div>
<div class="t" style="left:68.4px;top:642.95px;font-size:11.5px;line-height:11.5px;color:#1a1a1a;font-weight:bold;letter-spacing:0.3px">Max</div>
<div class="t" style="left:127px;top:642.95px;font-size:11.5px;line-height:11.5px;color:#1a1a1a;font-weight:bold;letter-spacing:0.3px">5.68A</div>
<div class="t" style="left:195.1px;top:642.95px;font-size:11.5px;line-height:11.5px;color:#1a1a1a;font-weight:bold;letter-spacing:0.3px">5.6754976</div>
<div class="t" style="left:273.1px;top:642.95px;font-size:11.5px;line-height:11.5px;color:#1a1a1a;font-weight:bold;letter-spacing:0.3px">1.04</div>
<div class="t" style="left:341.6px;top:642.95px;font-size:11.5px;line-height:11.5px;color:#1a1a1a;font-weight:bold;letter-spacing:0.3px">7.8</div>
<div class="t" style="left:409.3px;top:642.95px;font-size:11.5px;line-height:11.5px;color:#1a1a1a;font-weight:bold;letter-spacing:0.3px">36.12m</div>
<div class="t" style="left:477.6px;top:642.95px;font-size:11.5px;line-height:11.5px;color:#1a1a1a;font-weight:bold;letter-spacing:0.3px">3.154k</div>
<div class="pill" style="left:30px;top:659.75px;width:31.2px;height:12.8px"><div class="pin" style="background:linear-gradient(#ff00ff, #f818f8 40%, #e070e0)"></div><div class="ptx" style="font-size:9.2px;top:2.98px">C4</div></div>
<div class="t" style="left:68.4px;top:661.48px;font-size:11.5px;line-height:11.5px;color:#1a1a1a;font-weight:bold;letter-spacing:0.3px">Min</div>
<div class="t" style="left:127px;top:661.48px;font-size:11.5px;line-height:11.5px;color:#1a1a1a;font-weight:bold;letter-spacing:0.3px">3.44A</div>
<div class="t" style="left:195.1px;top:661.48px;font-size:11.5px;line-height:11.5px;color:#1a1a1a;font-weight:bold;letter-spacing:0.3px">3.3795822</div>
<div class="t" style="left:273.1px;top:661.48px;font-size:11.5px;line-height:11.5px;color:#1a1a1a;font-weight:bold;letter-spacing:0.3px">-1.08</div>
<div class="t" style="left:341.6px;top:661.48px;font-size:11.5px;line-height:11.5px;color:#1a1a1a;font-weight:bold;letter-spacing:0.3px">5.32</div>
<div class="t" style="left:409.3px;top:661.48px;font-size:11.5px;line-height:11.5px;color:#1a1a1a;font-weight:bold;letter-spacing:0.3px">38.86m</div>
<div class="t" style="left:477.6px;top:661.48px;font-size:11.5px;line-height:11.5px;color:#1a1a1a;font-weight:bold;letter-spacing:0.3px">3.154k</div>
<div class="pill" style="left:30px;top:678.27px;width:31.2px;height:12.8px"><div class="pin" style="background:linear-gradient(#ff00ff, #f818f8 40%, #e070e0)"></div><div class="ptx" style="font-size:9.2px;top:2.98px">C4</div></div>
<div class="t" style="left:68.4px;top:680px;font-size:11.5px;line-height:11.5px;color:#1a1a1a;font-weight:bold;letter-spacing:0.3px">RMS</div>
<div class="t" style="left:127px;top:680px;font-size:11.5px;line-height:11.5px;color:#1a1a1a;font-weight:bold;letter-spacing:0.3px">4.613A</div>
<div class="t" style="left:195.1px;top:680px;font-size:11.5px;line-height:11.5px;color:#1a1a1a;font-weight:bold;letter-spacing:0.3px">4.5670662</div>
<div class="t" style="left:273.1px;top:680px;font-size:11.5px;line-height:11.5px;color:#1a1a1a;font-weight:bold;letter-spacing:0.3px">615.1m</div>
<div class="t" style="left:341.6px;top:680px;font-size:11.5px;line-height:11.5px;color:#1a1a1a;font-weight:bold;letter-spacing:0.3px">6.549</div>
<div class="t" style="left:409.3px;top:680px;font-size:11.5px;line-height:11.5px;color:#1a1a1a;font-weight:bold;letter-spacing:0.3px">27.18m</div>
<div class="t" style="left:477.6px;top:680px;font-size:11.5px;line-height:11.5px;color:#1a1a1a;font-weight:bold;letter-spacing:0.3px">3.154k</div>
</body></html>
